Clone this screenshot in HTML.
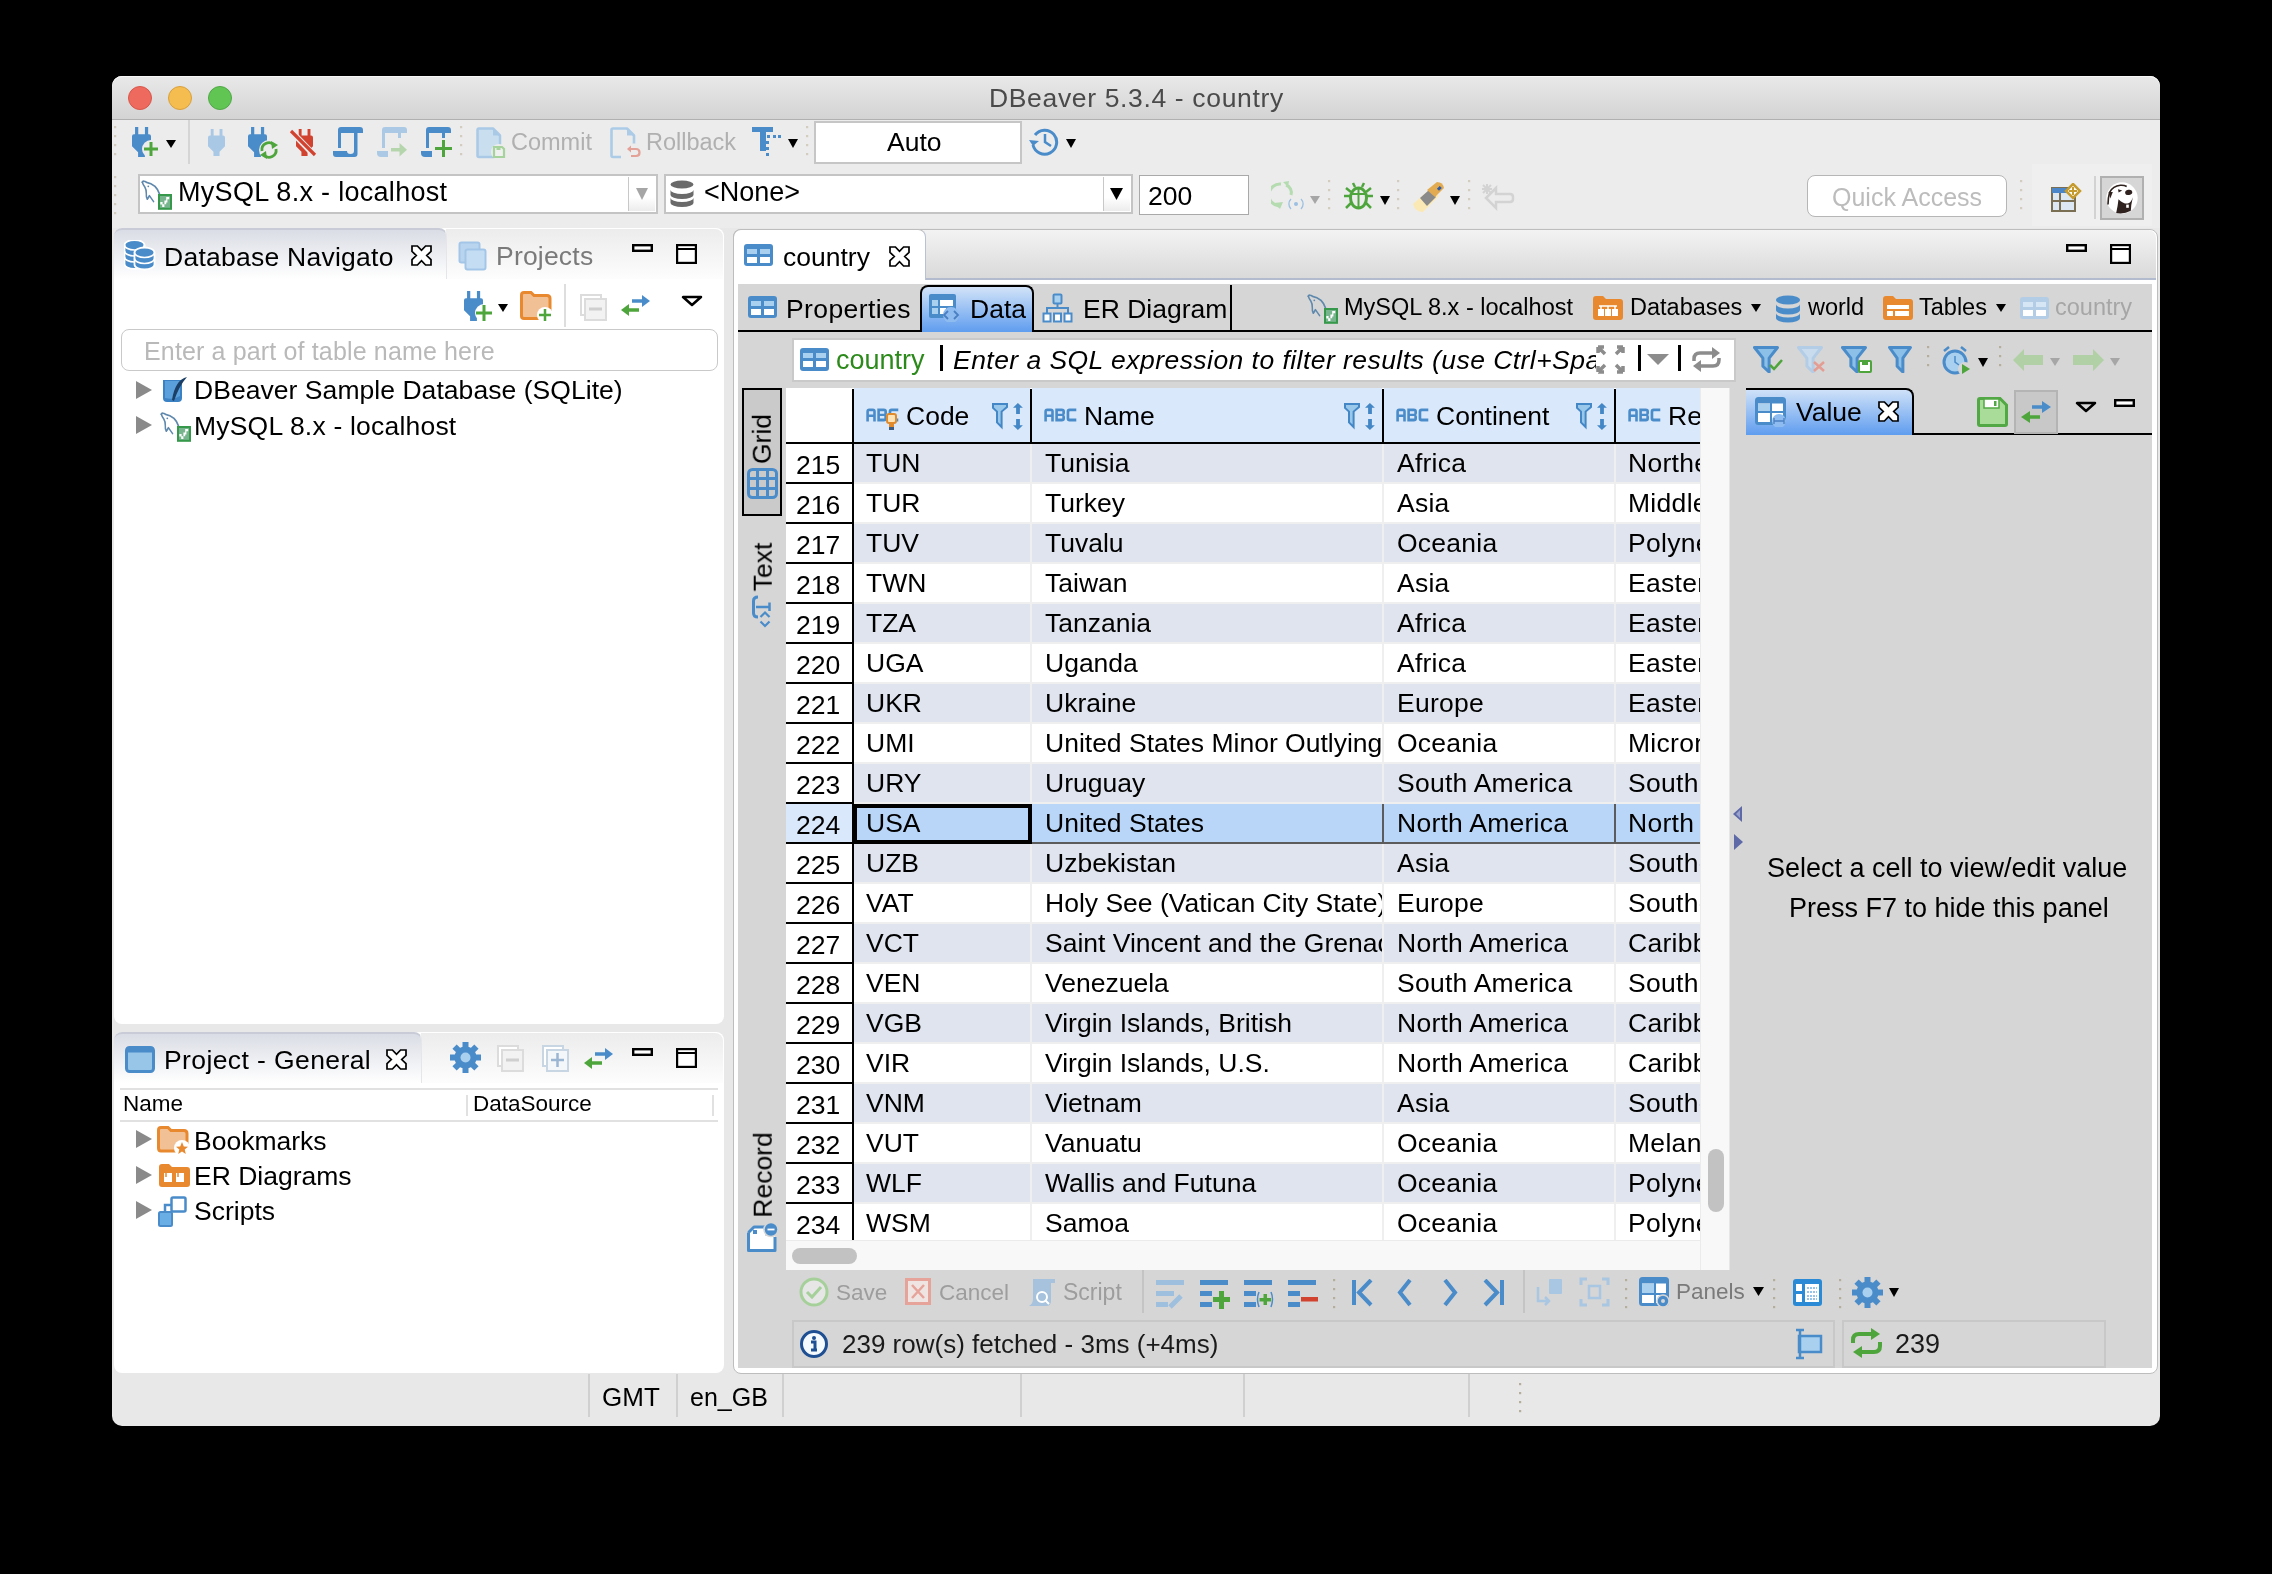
<!DOCTYPE html><html><head><meta charset="utf-8"><style>
*{box-sizing:border-box}
html,body{margin:0;padding:0}
body{width:2272px;height:1574px;background:#000;position:relative;overflow:hidden;font-family:"Liberation Sans",sans-serif}
.a{position:absolute;display:block}
.t{position:absolute;white-space:nowrap;line-height:1;font-family:"Liberation Sans",sans-serif;will-change:transform}
.i{font-style:italic}
</style></head><body>
<div class="a" style="left:112px;top:76px;width:2048px;height:1350px;background:#e8e8e8;border-radius:10px;overflow:hidden"></div>
<div class="a" style="left:112px;top:76px;width:2048px;height:44px;background:linear-gradient(#e9e9e9,#d3d3d3);border-radius:10px 10px 0 0;border-bottom:1px solid #b0b0b0;box-shadow:inset 0 1px 0 #f7f7f7"></div>
<div class="t " style="left:988.5px;top:85.18px;font-size:26.5px;color:#4a4a4a;letter-spacing:0.65px">DBeaver 5.3.4 - country</div>
<div class="a" style="left:128px;top:86px;width:24px;height:24px;background:#ee6a5e;border-radius:50%;border:1px solid #d8564a"></div>
<div class="a" style="left:168px;top:86px;width:24px;height:24px;background:#f5bd4f;border-radius:50%;border:1px solid #d9a03d"></div>
<div class="a" style="left:208px;top:86px;width:24px;height:24px;background:#61c554;border-radius:50%;border:1px solid #50a847"></div>
<div class="a" style="left:112px;top:120px;width:2048px;height:108px;background:#ececec"></div>
<svg class="a" style="left:114px;top:126px" width="3" height="34" viewBox="0 0 3 34"><rect x="0" y="0" width="2.2" height="2.2" fill="#d3cdc0"/><rect x="0" y="9" width="2.2" height="2.2" fill="#d3cdc0"/><rect x="0" y="18" width="2.2" height="2.2" fill="#d3cdc0"/><rect x="0" y="27" width="2.2" height="2.2" fill="#d3cdc0"/></svg>
<svg class="a" style="left:132px;top:127px" width="19" height="30" viewBox="0 0 19 30"><rect x="3.04" y="0" width="3.23" height="8.20" fill="#4a8cca"/><rect x="12.92" y="0" width="3.23" height="8.20" fill="#4a8cca"/><path d="M0 9.20Q0 7.20 2 7.20H17Q19 7.20 19 9.20V19.20L12.92 25.20V30H6.08V25.20L0 19.20Z" fill="#4a8cca"/></svg>
<svg class="a" style="left:141px;top:139px" width="20" height="20" viewBox="0 0 20 20"><circle cx="10" cy="10" r="9" fill="#ececec"/><rect x="8.5" y="3" width="3" height="14" fill="#4ea53c"/><rect x="3" y="8.5" width="14" height="3" fill="#4ea53c"/></svg>
<svg class="a" style="left:166px;top:140px" width="10" height="8" viewBox="0 0 10 8"><path d="M0 0H10L5.0 8Z" fill="#000"/></svg>
<div class="a" style="left:188px;top:120px;width:2px;height:44px;background:#d5d5d5"></div>
<svg class="a" style="left:208px;top:129px" width="17" height="27" viewBox="0 0 17 27"><rect x="2.72" y="0" width="2.89" height="7.48" fill="#a9c8e6"/><rect x="11.56" y="0" width="2.89" height="7.48" fill="#a9c8e6"/><path d="M0 8.48Q0 6.48 2 6.48H15Q17 6.48 17 8.48V17.28L11.56 22.68V27H5.44V22.68L0 17.28Z" fill="#a9c8e6"/></svg>
<svg class="a" style="left:248px;top:127px" width="19" height="30" viewBox="0 0 19 30"><rect x="3.04" y="0" width="3.23" height="8.20" fill="#4a8cca"/><rect x="12.92" y="0" width="3.23" height="8.20" fill="#4a8cca"/><path d="M0 9.20Q0 7.20 2 7.20H17Q19 7.20 19 9.20V19.20L12.92 25.20V30H6.08V25.20L0 19.20Z" fill="#4a8cca"/></svg>
<svg class="a" style="left:258px;top:139px" width="22" height="22" viewBox="0 0 22 22"><circle cx="11" cy="11" r="10" fill="#ececec"/><path d="M4 12A7 7 0 0 1 16 6" stroke="#4ea53c" stroke-width="2.8" fill="none"/><path d="M18 10A7 7 0 0 1 6 16" stroke="#4ea53c" stroke-width="2.8" fill="none"/><path d="M13 2L20 6L14 10Z" fill="#4ea53c"/><path d="M9 20L2 16L8 12Z" fill="#4ea53c"/></svg>
<svg class="a" style="left:296px;top:129px" width="17" height="27" viewBox="0 0 17 27"><rect x="2.72" y="0" width="2.89" height="7.48" fill="#d2432f"/><rect x="11.56" y="0" width="2.89" height="7.48" fill="#d2432f"/><path d="M0 8.48Q0 6.48 2 6.48H15Q17 6.48 17 8.48V17.28L11.56 22.68V27H5.44V22.68L0 17.28Z" fill="#d2432f"/></svg>
<svg class="a" style="left:288px;top:128px" width="30" height="30" viewBox="0 0 30 30"><path d="M2 2L28 29" stroke="#ececec" stroke-width="6"/><path d="M3 3L27 27" stroke="#d2432f" stroke-width="3.2"/></svg>
<svg class="a" style="left:333px;top:127px" width="30" height="30" viewBox="0 0 30 30"><path d="M5 21V3Q5 0 8 0H27Q30 0 30 3V6H24.5V27Q24.5 30 21.5 30H3Q0 30 0 27V24H14Q14 27 17.5 27Q21 27 21 24V6H8V21Z" fill="#4a8cca"/></svg>
<svg class="a" style="left:377px;top:127px" width="30" height="30" viewBox="0 0 30 30"><path d="M5 21V3Q5 0 8 0H27Q30 0 30 3V6H24V11H21V6H8V21Z" fill="#abc9e4"/><path d="M0 24H11V30H4Q0 30 0 26Z" fill="#abc9e4"/></svg>
<svg class="a" style="left:391px;top:143px" width="17" height="14" viewBox="0 0 17 14"><rect x="0" y="5" width="9" height="3.5" fill="#b5d6ad"/><path d="M8.5 0L16 6.7L8.5 13.5Z" fill="#b5d6ad"/></svg>
<svg class="a" style="left:421px;top:127px" width="30" height="30" viewBox="0 0 30 30"><path d="M5 21V3Q5 0 8 0H27Q30 0 30 3V6H24V11H21V6H8V21Z" fill="#4a8cca"/><path d="M0 24H11V30H4Q0 30 0 26Z" fill="#4a8cca"/></svg>
<svg class="a" style="left:435px;top:140px" width="17" height="17" viewBox="0 0 17 17"><rect x="7" y="0" width="3" height="17" fill="#4ea53c"/><rect x="0" y="7" width="17" height="3" fill="#4ea53c"/></svg>
<svg class="a" style="left:460px;top:126px" width="3" height="34" viewBox="0 0 3 34"><rect x="0" y="0" width="2.2" height="2.2" fill="#d3cdc0"/><rect x="0" y="9" width="2.2" height="2.2" fill="#d3cdc0"/><rect x="0" y="18" width="2.2" height="2.2" fill="#d3cdc0"/><rect x="0" y="27" width="2.2" height="2.2" fill="#d3cdc0"/></svg>
<svg class="a" style="left:475px;top:126px" width="32" height="33" viewBox="0 0 32 33"><path d="M2.5 4Q2.5 2.5 4 2.5H18L25 9.5V29.5Q25 31 23.5 31H4Q2.5 31 2.5 29.5Z" fill="#c9dff0" stroke="#a9c9e6" stroke-width="2.5" stroke-linejoin="round"/><path d="M18 2.5V9.5H25Z" fill="#a9c9e6"/><circle cx="24" cy="26" r="8" fill="#ececec"/><path d="M19 21H27L29 23V31H19Z" fill="#f0f0f0" stroke="#a6d29b" stroke-width="2.2"/><rect x="21.5" y="21" width="4" height="3" fill="#a6d29b"/></svg>
<div class="t " style="left:511px;top:130.53px;font-size:23.5px;color:#b0b0b0;">Commit</div>
<svg class="a" style="left:609px;top:126px" width="32" height="33" viewBox="0 0 32 33"><path d="M12 31H4Q2.5 31 2.5 29.5V4Q2.5 2.5 4 2.5H18L25 9.5V17.5" fill="none" stroke="#abcbe7" stroke-width="2.6" stroke-linejoin="round"/><path d="M18 2.5V9.5H25Z" fill="#abcbe7"/><path d="M20 23H27Q30.5 23 30.5 26.5Q30.5 30 27 30H22" stroke="#e3a197" stroke-width="2.2" fill="none"/><path d="M18 23L22 19.5V26.5Z" fill="#e3a197"/></svg>
<div class="t " style="left:645.5px;top:130.53px;font-size:23.5px;color:#b0b0b0;">Rollback</div>
<svg class="a" style="left:752px;top:127px" width="29" height="30" viewBox="0 0 29 30"><rect x="0" y="0" width="21" height="5" fill="#4a8cca"/><rect x="8" y="0" width="6" height="24" fill="#4a8cca"/><rect x="15" y="8" width="3" height="3" fill="#4a8cca"/><rect x="21" y="8" width="3" height="3" fill="#4a8cca"/><rect x="26" y="8" width="3" height="3" fill="#4a8cca"/><rect x="14" y="14" width="3" height="3" fill="#4a8cca"/><rect x="14" y="20" width="3" height="3" fill="#4a8cca"/><rect x="14" y="26" width="3" height="3" fill="#4a8cca"/></svg>
<svg class="a" style="left:788px;top:139px" width="10" height="9" viewBox="0 0 10 9"><path d="M0 0H10L5.0 9Z" fill="#000"/></svg>
<svg class="a" style="left:806px;top:126px" width="3" height="34" viewBox="0 0 3 34"><rect x="0" y="0" width="2.2" height="2.2" fill="#d3cdc0"/><rect x="0" y="9" width="2.2" height="2.2" fill="#d3cdc0"/><rect x="0" y="18" width="2.2" height="2.2" fill="#d3cdc0"/><rect x="0" y="27" width="2.2" height="2.2" fill="#d3cdc0"/></svg>
<div class="a" style="left:814px;top:121px;width:208px;height:43px;background:#fff;border:2px solid #c6c6c6"></div>
<div class="t " style="left:887px;top:129.47px;font-size:26.5px;color:#000;">Auto</div>
<svg class="a" style="left:1028px;top:126px" width="32" height="31" viewBox="0 0 32 31"><path d="M7 9A12 12 0 1 1 5 19" stroke="#4a8cca" stroke-width="3" fill="none"/><path d="M1 14L5 20L11 15Z" fill="#4a8cca"/><path d="M17 8V16L23 20" stroke="#4a8cca" stroke-width="2.5" fill="none"/></svg>
<svg class="a" style="left:1066px;top:139px" width="10" height="9" viewBox="0 0 10 9"><path d="M0 0H10L5.0 9Z" fill="#000"/></svg>
<svg class="a" style="left:114px;top:176px" width="3" height="40" viewBox="0 0 3 40"><rect x="0" y="0" width="2.2" height="2.2" fill="#d3cdc0"/><rect x="0" y="9" width="2.2" height="2.2" fill="#d3cdc0"/><rect x="0" y="18" width="2.2" height="2.2" fill="#d3cdc0"/><rect x="0" y="27" width="2.2" height="2.2" fill="#d3cdc0"/><rect x="0" y="36" width="2.2" height="2.2" fill="#d3cdc0"/></svg>
<div class="a" style="left:138px;top:174px;width:520px;height:40px;background:#fff;border:2px solid #c4c4c4"></div>
<div class="a" style="left:628px;top:177px;width:27px;height:34px;background:linear-gradient(#fff 60%,#ececec);border-left:1px solid #c8c8c8"></div>
<svg class="a" style="left:636px;top:188px" width="12" height="12" viewBox="0 0 12 12"><path d="M0 0H12L6 12Z" fill="#a6a6a6"/></svg>
<svg class="a" style="left:138px;top:176px" width="36" height="36" viewBox="0 0 36 36"><path d="M4.3 6.2Q5.5 4.2 8.5 6.3Q13 7 17 10.3Q20.2 13.5 21.4 17.8" stroke="#5f88ad" stroke-width="1.7" fill="none" stroke-linecap="round"/><path d="M4.3 6.2Q5 8.5 6.8 11Q8.6 14 8.3 17.5Q8 21 9.3 23.3Q10.5 21.5 11.4 19.6L15.6 25.6" stroke="#5f88ad" stroke-width="1.5" fill="none" stroke-linecap="round" stroke-linejoin="round"/><circle cx="10.3" cy="10.3" r="0.9" fill="#5f88ad"/><rect x="20" y="18" width="14" height="15.8" fill="#35984a"/><rect x="22" y="20" width="10" height="11.8" fill="#78b58e"/><path d="M22.3 26H24.6V28.2H26.4V31H24.2V28.6H22.3Z" fill="#fff"/><path d="M26.4 28.2V24.5H28.2V21H31.2V23.2H29.4V26.6H28.2V28.2Z" fill="#fff"/></svg>
<div class="t " style="left:177.5px;top:179.05px;font-size:27px;color:#000;letter-spacing:0.3px">MySQL 8.x - localhost</div>
<div class="a" style="left:664px;top:174px;width:469px;height:40px;background:#fff;border:2px solid #c4c4c4"></div>
<div class="a" style="left:1103px;top:177px;width:27px;height:34px;background:linear-gradient(#fff 60%,#ececec);border-left:1px solid #c8c8c8"></div>
<svg class="a" style="left:1110px;top:188px" width="13" height="12" viewBox="0 0 13 12"><path d="M0 0H13L6.5 12Z" fill="#000"/></svg>
<svg class="a" style="left:670px;top:180px" width="24" height="27" viewBox="0 0 24 27"><ellipse cx="12.0" cy="4.5" rx="11.5" ry="4" fill="#6a6a6a"/><path d="M0.5 10A11.5 4 0 0 0 23.5 10V15A11.5 4 0 0 1 0.5 15Z" fill="#6a6a6a"/><path d="M0.5 18A11.5 4 0 0 0 23.5 18V23A11.5 4 0 0 1 0.5 23Z" fill="#6a6a6a"/></svg>
<div class="t " style="left:704px;top:179.05px;font-size:27px;color:#000;">&lt;None&gt;</div>
<div class="a" style="left:1139px;top:175px;width:110px;height:40px;background:#fff;border:1px solid #a9a9a9"></div>
<div class="t " style="left:1147.5px;top:183.47px;font-size:26.5px;color:#000;">200</div>
<svg class="a" style="left:1271px;top:181px" width="34" height="30" viewBox="0 0 34 30"><path d="M10 3A11 11 0 0 0 8 25" stroke="#b5dbb0" stroke-width="3" fill="none"/><path d="M3 22L9 28L12 21Z" fill="#b5dbb0"/><path d="M18 26V4" stroke="none"/><path d="M20 14A8 8 0 0 0 15 4" stroke="#b5dbb0" stroke-width="3" fill="none"/><path d="M12 1L18 0L17 6Z" fill="#b5dbb0"/><circle cx="25" cy="23" r="2" fill="#9cc0e2"/><path d="M20 18A7 7 0 0 0 20 28M30 18A7 7 0 0 1 30 28" stroke="#9cc0e2" stroke-width="1.3" fill="none"/></svg>
<svg class="a" style="left:1310px;top:196px" width="10" height="8" viewBox="0 0 10 8"><path d="M0 0H10L5 8Z" fill="#a6a6a6"/></svg>
<svg class="a" style="left:1328px;top:180px" width="3" height="34" viewBox="0 0 3 34"><rect x="0" y="0" width="2.2" height="2.2" fill="#d3cdc0"/><rect x="0" y="9" width="2.2" height="2.2" fill="#d3cdc0"/><rect x="0" y="18" width="2.2" height="2.2" fill="#d3cdc0"/><rect x="0" y="27" width="2.2" height="2.2" fill="#d3cdc0"/></svg>
<svg class="a" style="left:1343px;top:182px" width="31" height="29" viewBox="0 0 31 29"><ellipse cx="15.5" cy="16" rx="8" ry="10" fill="none" stroke="#4ea53c" stroke-width="3"/><path d="M15.5 7V26M9 12H22" stroke="#4ea53c" stroke-width="2"/><path d="M1 14H7M24 14H30M3 6L8 10M28 6L23 10M3 26L8 21M28 26L23 21M10 1L12 5M21 1L19 5" stroke="#4ea53c" stroke-width="2.5"/></svg>
<svg class="a" style="left:1380px;top:196px" width="10" height="9" viewBox="0 0 10 9"><path d="M0 0H10L5.0 9Z" fill="#000"/></svg>
<svg class="a" style="left:1397px;top:180px" width="3" height="34" viewBox="0 0 3 34"><rect x="0" y="0" width="2.2" height="2.2" fill="#d3cdc0"/><rect x="0" y="9" width="2.2" height="2.2" fill="#d3cdc0"/><rect x="0" y="18" width="2.2" height="2.2" fill="#d3cdc0"/><rect x="0" y="27" width="2.2" height="2.2" fill="#d3cdc0"/></svg>
<svg class="a" style="left:1411px;top:182px" width="34" height="30" viewBox="0 0 34 30"><path d="M2 22L20 6L28 14L12 30Q4 30 2 22Z" fill="#fbe9b5"/><path d="M9 16L18 8L25 15L16 24Z" fill="#8a8a8a"/><path d="M16 8L26 0Q32 0 33 6L24 15Z" fill="#e2ab52"/><rect x="27" y="4" width="3" height="4" fill="#2d5aa6" transform="rotate(45 28 6)"/></svg>
<svg class="a" style="left:1450px;top:196px" width="10" height="9" viewBox="0 0 10 9"><path d="M0 0H10L5.0 9Z" fill="#000"/></svg>
<svg class="a" style="left:1468px;top:180px" width="3" height="34" viewBox="0 0 3 34"><rect x="0" y="0" width="2.2" height="2.2" fill="#d3cdc0"/><rect x="0" y="9" width="2.2" height="2.2" fill="#d3cdc0"/><rect x="0" y="18" width="2.2" height="2.2" fill="#d3cdc0"/><rect x="0" y="27" width="2.2" height="2.2" fill="#d3cdc0"/></svg>
<svg class="a" style="left:1482px;top:182px" width="33" height="30" viewBox="0 0 33 30"><path d="M5 2V12M0 7H10M1 3L9 11M9 3L1 11" stroke="#d3d3d3" stroke-width="2"/><path d="M14 6L4 16L14 26V20H28Q31 20 31 17V15Q31 12 28 12H14Z" fill="none" stroke="#d3d3d3" stroke-width="2.5"/></svg>
<div class="a" style="left:1807px;top:175px;width:200px;height:42px;background:#fff;border:1px solid #b6b6b6;border-radius:8px"></div>
<div class="t " style="left:1831.5px;top:184.75px;font-size:25px;color:#bcbcbc;">Quick Access</div>
<svg class="a" style="left:2020px;top:180px" width="3" height="36" viewBox="0 0 3 36"><rect x="0" y="0" width="2.2" height="2.2" fill="#d3cdc0"/><rect x="0" y="9" width="2.2" height="2.2" fill="#d3cdc0"/><rect x="0" y="18" width="2.2" height="2.2" fill="#d3cdc0"/><rect x="0" y="27" width="2.2" height="2.2" fill="#d3cdc0"/></svg>
<div class="a" style="left:2032px;top:164px;width:120px;height:62px;background:#efefef"></div>
<svg class="a" style="left:2051px;top:183px" width="31" height="30" viewBox="0 0 31 30"><rect x="1" y="5" width="23" height="23" fill="#dce9f5" stroke="#7a6f53" stroke-width="2"/><rect x="1" y="5" width="23" height="5" fill="#4a86c8"/><path d="M9 10V28M1 18H24" stroke="#7a6f53" stroke-width="2"/><path d="M22 1L29 8L22 15L15 8Z" fill="#fff" stroke="#c59b2d" stroke-width="2.5"/><path d="M22 4V12M18 8H26" stroke="#c59b2d" stroke-width="2"/></svg>
<div class="a" style="left:2094px;top:176px;width:2px;height:43px;background:#d2d2d2"></div>
<svg class="a" style="left:2098px;top:174px" width="48" height="48" viewBox="0 0 48 48"><rect x="3" y="3" width="42" height="42" fill="#d6d6d6" stroke="#b0b0b0" stroke-width="2"/><circle cx="24" cy="24" r="15.7" fill="#fff"/><g fill="#2e211e"><path d="M10 30.5Q10 24 11.6 18.3Q15 12 22.3 11.3Q26 11 28.7 12.5" stroke="#2e211e" stroke-width="1.6" fill="none"/><path d="M10.7 18L14.8 18L12.3 24.5Z"/><path d="M20 15.2L24.2 16.6L20.6 18.6Z"/><ellipse cx="30.7" cy="18.4" rx="3.6" ry="2.6" transform="rotate(-12 30.7 18.4)"/><path d="M20.5 25.2Q25 29.8 29.5 29.6Q33 29 34.8 23.2L33.3 31L32.8 36.8Q26 40.5 18.2 39Q19.8 32 20.5 25.2Z"/><rect x="28.2" y="30.6" width="2.6" height="3.2" fill="#fff"/></g></svg>
<div class="a" style="left:114px;top:228px;width:610px;height:796px;background:#fff;border-radius:8px"></div>
<div class="a" style="left:446px;top:229px;width:277px;height:50px;background:linear-gradient(#ececec,#fdfdfd);border-radius:0 8px 0 0"></div>
<div class="a" style="left:114px;top:228px;width:333px;height:51px;background:linear-gradient(#dadde5,#ffffff);border-radius:8px 8px 0 0;border-top:2px solid #c9ccd6;border-right:1px solid #e4e6ea"></div>
<svg class="a" style="left:124px;top:240px" width="32" height="31" viewBox="0 0 32 31"><path d="M0.5 5V24A10 5 0 0 0 20.5 24V5A10 5 0 0 0 0.5 5Z" fill="#4a8cca" stroke="#fff" stroke-width="1.8"/><path d="M0.5 5A10 5 0 0 0 20.5 5" fill="none" stroke="#fff" stroke-width="1.6"/><path d="M0.5 11A10 5 0 0 0 20.5 11" fill="none" stroke="#fff" stroke-width="1.6"/><path d="M0.5 17A10 5 0 0 0 20.5 17" fill="none" stroke="#fff" stroke-width="1.6"/><path d="M10.5 12.5V24.5A10 5 0 0 0 30.5 24.5V12.5A10 5 0 0 0 10.5 12.5Z" fill="#4a8cca" stroke="#fff" stroke-width="1.8"/><path d="M10.5 12.5A10 5 0 0 0 30.5 12.5" fill="none" stroke="#fff" stroke-width="1.6"/><path d="M10.5 18.5A10 5 0 0 0 30.5 18.5" fill="none" stroke="#fff" stroke-width="1.6"/></svg>
<div class="t " style="left:163.5px;top:243.58px;font-size:26.5px;color:#000;letter-spacing:0.25px">Database Navigato</div>
<svg class="a" style="left:411px;top:245px" width="22" height="22" viewBox="0 0 22 22"><path d="M1.00 1.00 L6.42 1.00 L10.50 5.28 L14.58 1.00 L20.00 1.00 L20.00 6.42 L15.72 10.50 L20.00 14.58 L20.00 20.00 L14.58 20.00 L10.50 15.72 L6.42 20.00 L1.00 20.00 L1.00 14.58 L5.28 10.50 L1.00 6.42Z" fill="#fff" stroke="#000" stroke-width="1.7" stroke-linejoin="miter"/></svg>
<svg class="a" style="left:458px;top:241px" width="29" height="30" viewBox="0 0 29 30"><rect x="1.5" y="1.5" width="20" height="20" rx="2" fill="#b8d4ee" stroke="#a3c6e8" stroke-width="2"/><rect x="7.5" y="8.5" width="20" height="20" rx="2" fill="#c4ddf2" stroke="#a3c6e8" stroke-width="2"/></svg>
<div class="t " style="left:495.5px;top:243.08px;font-size:26.5px;color:#7a7a7a;letter-spacing:0.2px">Projects</div>
<svg class="a" style="left:632px;top:244px" width="21" height="8" viewBox="0 0 21 8"><rect x="1.2" y="1.2" width="18.6" height="5.6" fill="#fff" stroke="#000" stroke-width="2.4"/></svg>
<svg class="a" style="left:676px;top:244px" width="21" height="20" viewBox="0 0 21 20"><rect x="1.1" y="1.1" width="18.8" height="17.8" fill="#fff" stroke="#000" stroke-width="2.2"/><rect x="1" y="4" width="19" height="2" fill="#000"/></svg>
<svg class="a" style="left:464px;top:291px" width="19" height="30" viewBox="0 0 19 30"><rect x="3.04" y="0" width="3.23" height="8.20" fill="#4a8cca"/><rect x="12.92" y="0" width="3.23" height="8.20" fill="#4a8cca"/><path d="M0 9.20Q0 7.20 2 7.20H17Q19 7.20 19 9.20V19.20L12.92 25.20V30H6.08V25.20L0 19.20Z" fill="#4a8cca"/></svg>
<svg class="a" style="left:474px;top:303px" width="20" height="20" viewBox="0 0 20 20"><circle cx="10" cy="10" r="9" fill="#fff"/><rect x="8.5" y="2" width="3" height="16" fill="#4ea53c"/><rect x="2" y="8.5" width="16" height="3" fill="#4ea53c"/></svg>
<svg class="a" style="left:498px;top:304px" width="10" height="8" viewBox="0 0 10 8"><path d="M0 0H10L5.0 8Z" fill="#000"/></svg>
<svg class="a" style="left:520px;top:291px" width="33" height="30" viewBox="0 0 33 30"><path d="M1.5 4Q1.5 1.5 4 1.5H11L14 4.5H27Q30 4.5 30 7.5V25Q30 27.5 27 27.5H4Q1.5 27.5 1.5 25Z" fill="#f2c095" stroke="#e8892f" stroke-width="3"/><circle cx="25" cy="24" r="8" fill="#fff"/><path d="M25 18V30M19 24H31" stroke="#4ea53c" stroke-width="2.5"/></svg>
<div class="a" style="left:564px;top:284px;width:2px;height:43px;background:#dedede"></div>
<svg class="a" style="left:580px;top:294px" width="27" height="27" viewBox="0 0 27 27"><rect x="1" y="1" width="20" height="20" fill="#fff" stroke="#dcdcdc" stroke-width="2"/><rect x="5" y="5" width="21" height="21" fill="#f2f2f2" stroke="#dcdcdc" stroke-width="2"/><path d="M9 15H22" stroke="#cfcfcf" stroke-width="3"/></svg>
<svg class="a" style="left:620px;top:295px" width="31" height="22" viewBox="0 0 31 22"><path d="M12 6H26" stroke="#4a8cca" stroke-width="3.5"/><path d="M22 0L30 6L22 12Z" fill="#4a8cca"/><path d="M6 15H19" stroke="#4ea53c" stroke-width="3.5"/><path d="M9 9L1 15L9 21Z" fill="#4ea53c"/></svg>
<svg class="a" style="left:681px;top:295px" width="22" height="12" viewBox="0 0 22 12"><path d="M2 2H20L11 10Z" fill="none" stroke="#000" stroke-width="2.5" stroke-linejoin="round"/></svg>
<div class="a" style="left:121px;top:329px;width:597px;height:42px;background:#fff;border:1.5px solid #c9c9c9;border-radius:8px"></div>
<div class="t " style="left:143.5px;top:338.75px;font-size:25px;color:#b9b9b9;letter-spacing:0.15px">Enter a part of table name here</div>
<svg class="a" style="left:136px;top:381px" width="16" height="18" viewBox="0 0 16 18"><path d="M0 0L16 9L0 18Z" fill="#8a8a8a"/></svg>
<svg class="a" style="left:160px;top:376px" width="28" height="28" viewBox="0 0 28 28"><path d="M3 4H22V22Q22 26 18 26H7Q3 26 3 22Z" fill="#3b82c4"/><path d="M5 5H20V20Q14 24 5 22Z" fill="#5aa0dc"/><path d="M27 1Q15 4 12 24L14 25Q19 10 27 1Z" fill="#1c3f66"/></svg>
<div class="t " style="left:193.5px;top:377.18px;font-size:26.5px;color:#000;letter-spacing:0.05px">DBeaver Sample Database (SQLite)</div>
<svg class="a" style="left:136px;top:416px" width="16" height="18" viewBox="0 0 16 18"><path d="M0 0L16 9L0 18Z" fill="#8a8a8a"/></svg>
<svg class="a" style="left:157px;top:408px" width="36" height="36" viewBox="0 0 36 36"><path d="M4.3 6.2Q5.5 4.2 8.5 6.3Q13 7 17 10.3Q20.2 13.5 21.4 17.8" stroke="#5f88ad" stroke-width="1.7" fill="none" stroke-linecap="round"/><path d="M4.3 6.2Q5 8.5 6.8 11Q8.6 14 8.3 17.5Q8 21 9.3 23.3Q10.5 21.5 11.4 19.6L15.6 25.6" stroke="#5f88ad" stroke-width="1.5" fill="none" stroke-linecap="round" stroke-linejoin="round"/><circle cx="10.3" cy="10.3" r="0.9" fill="#5f88ad"/><rect x="20" y="18" width="14" height="15.8" fill="#35984a"/><rect x="22" y="20" width="10" height="11.8" fill="#78b58e"/><path d="M22.3 26H24.6V28.2H26.4V31H24.2V28.6H22.3Z" fill="#fff"/><path d="M26.4 28.2V24.5H28.2V21H31.2V23.2H29.4V26.6H28.2V28.2Z" fill="#fff"/></svg>
<div class="t " style="left:193.5px;top:412.98px;font-size:26.5px;color:#000;letter-spacing:0.2px">MySQL 8.x - localhost</div>
<div class="a" style="left:114px;top:1032px;width:610px;height:341px;background:#fff;border-radius:8px"></div>
<div class="a" style="left:421px;top:1033px;width:302px;height:50px;background:linear-gradient(#ececec,#fdfdfd);border-radius:0 8px 0 0"></div>
<div class="a" style="left:114px;top:1032px;width:308px;height:51px;background:linear-gradient(#dadde5,#ffffff);border-radius:8px 8px 0 0;border-top:2px solid #c9ccd6;border-right:1px solid #e4e6ea"></div>
<svg class="a" style="left:125px;top:1046px" width="31" height="28" viewBox="0 0 31 28"><rect x="1.5" y="1.5" width="27" height="24" rx="3" fill="#97c6e8" stroke="#4a8cca" stroke-width="3"/><rect x="1.5" y="1.5" width="27" height="5" fill="#4a8cca"/></svg>
<div class="t " style="left:163.5px;top:1047.38px;font-size:26.5px;color:#000;letter-spacing:0.4px">Project - General</div>
<svg class="a" style="left:386px;top:1049px" width="22" height="22" viewBox="0 0 22 22"><path d="M1.00 1.00 L6.42 1.00 L10.50 5.28 L14.58 1.00 L20.00 1.00 L20.00 6.42 L15.72 10.50 L20.00 14.58 L20.00 20.00 L14.58 20.00 L10.50 15.72 L6.42 20.00 L1.00 20.00 L1.00 14.58 L5.28 10.50 L1.00 6.42Z" fill="#fff" stroke="#000" stroke-width="1.7" stroke-linejoin="miter"/></svg>
<svg class="a" style="left:450px;top:1042px" width="31" height="31" viewBox="0 0 31 31"><circle cx="15.5" cy="15.5" r="11" fill="#4a8cca"/><circle cx="15.5" cy="15.5" r="5" fill="#a9d0ee"/><rect x="12.5" y="0" width="6" height="7" fill="#4a8cca" transform="rotate(0 15.5 15.5)"/><rect x="12.5" y="0" width="6" height="7" fill="#4a8cca" transform="rotate(45 15.5 15.5)"/><rect x="12.5" y="0" width="6" height="7" fill="#4a8cca" transform="rotate(90 15.5 15.5)"/><rect x="12.5" y="0" width="6" height="7" fill="#4a8cca" transform="rotate(135 15.5 15.5)"/><rect x="12.5" y="0" width="6" height="7" fill="#4a8cca" transform="rotate(180 15.5 15.5)"/><rect x="12.5" y="0" width="6" height="7" fill="#4a8cca" transform="rotate(225 15.5 15.5)"/><rect x="12.5" y="0" width="6" height="7" fill="#4a8cca" transform="rotate(270 15.5 15.5)"/><rect x="12.5" y="0" width="6" height="7" fill="#4a8cca" transform="rotate(315 15.5 15.5)"/></svg>
<svg class="a" style="left:497px;top:1045px" width="28" height="28" viewBox="0 0 28 28"><rect x="1" y="1" width="20" height="20" fill="#fff" stroke="#dcdcdc" stroke-width="2"/><rect x="5" y="5" width="21" height="21" fill="#f2f2f2" stroke="#dcdcdc" stroke-width="2"/><path d="M9 15H22" stroke="#cfcfcf" stroke-width="3"/></svg>
<svg class="a" style="left:542px;top:1045px" width="27" height="28" viewBox="0 0 27 28"><rect x="1" y="1" width="20" height="20" fill="#fff" stroke="#c8d6e4" stroke-width="2"/><rect x="5" y="5" width="21" height="21" fill="#f4f7fa" stroke="#c8d6e4" stroke-width="2"/><path d="M9 15H22M15.5 8V22" stroke="#9ab6d2" stroke-width="2.5"/></svg>
<svg class="a" style="left:583px;top:1048px" width="31" height="22" viewBox="0 0 31 22"><path d="M12 6H26" stroke="#4a8cca" stroke-width="3.5"/><path d="M22 0L30 6L22 12Z" fill="#4a8cca"/><path d="M6 15H19" stroke="#4ea53c" stroke-width="3.5"/><path d="M9 9L1 15L9 21Z" fill="#4ea53c"/></svg>
<svg class="a" style="left:632px;top:1048px" width="21" height="8" viewBox="0 0 21 8"><rect x="1.2" y="1.2" width="18.6" height="5.6" fill="#fff" stroke="#000" stroke-width="2.4"/></svg>
<svg class="a" style="left:676px;top:1048px" width="21" height="20" viewBox="0 0 21 20"><rect x="1.1" y="1.1" width="18.8" height="17.8" fill="#fff" stroke="#000" stroke-width="2.2"/><rect x="1" y="4" width="19" height="2" fill="#000"/></svg>
<div class="a" style="left:120px;top:1088px;width:598px;height:2px;background:#e1e1e1"></div>
<div class="a" style="left:120px;top:1120px;width:598px;height:2px;background:#e1e1e1"></div>
<div class="t " style="left:123px;top:1092.88px;font-size:22.5px;color:#000;">Name</div>
<div class="a" style="left:466px;top:1095px;width:2px;height:21px;background:#e1e1e1"></div>
<div class="t " style="left:472.5px;top:1092.88px;font-size:22.5px;color:#000;">DataSource</div>
<div class="a" style="left:712px;top:1095px;width:2px;height:21px;background:#e1e1e1"></div>
<svg class="a" style="left:136px;top:1130px" width="16" height="18" viewBox="0 0 16 18"><path d="M0 0L16 9L0 18Z" fill="#8a8a8a"/></svg>
<svg class="a" style="left:157px;top:1126px" width="34" height="30" viewBox="0 0 34 30"><path d="M1.5 4Q1.5 1.5 4 1.5H11L14 4.5H27Q30 4.5 30 7.5V22Q30 25 27 25H4Q1.5 25 1.5 22Z" fill="#f2c095" stroke="#e8892f" stroke-width="3"/><circle cx="25" cy="22" r="8" fill="#fff"/><path d="M25 16L26.8 20.5L31 20.7L27.7 23.5L28.8 28L25 25.4L21.2 28L22.3 23.5L19 20.7L23.2 20.5Z" fill="#e8892f"/></svg>
<div class="t " style="left:193.5px;top:1128.17px;font-size:26.5px;color:#000;">Bookmarks</div>
<svg class="a" style="left:136px;top:1166px" width="16" height="18" viewBox="0 0 16 18"><path d="M0 0L16 9L0 18Z" fill="#8a8a8a"/></svg>
<svg class="a" style="left:159px;top:1163px" width="31" height="24" viewBox="0 0 31 24"><path d="M0 4Q0 1 3 1H10L13 4H28Q31 4 31 7V21Q31 24 28 24H3Q0 24 0 21Z" fill="#e8892f"/><rect x="5" y="10" width="8" height="9" fill="#fff"/><rect x="17" y="10" width="8" height="9" fill="#fff"/><path d="M7 10V14M19 10V14" stroke="#e8892f" stroke-width="1.5"/></svg>
<div class="t " style="left:193.5px;top:1163.47px;font-size:26.5px;color:#000;">ER Diagrams</div>
<svg class="a" style="left:136px;top:1201px" width="16" height="18" viewBox="0 0 16 18"><path d="M0 0L16 9L0 18Z" fill="#8a8a8a"/></svg>
<svg class="a" style="left:157px;top:1196px" width="32" height="32" viewBox="0 0 32 32"><rect x="14.5" y="1.5" width="14" height="14" rx="1.5" fill="#fff" stroke="#4a8cca" stroke-width="2.5"/><path d="M8 16V9H14" stroke="#4a8cca" stroke-width="2.5" fill="none"/><rect x="2" y="16" width="13" height="14" rx="1.5" fill="#6aaee6" stroke="#4a8cca" stroke-width="2"/></svg>
<div class="t " style="left:193.5px;top:1198.47px;font-size:26.5px;color:#000;">Scripts</div>
<div class="a" style="left:588px;top:1374px;width:2px;height:43px;background:#d0d0d0"></div>
<div class="a" style="left:676px;top:1374px;width:2px;height:43px;background:#d0d0d0"></div>
<div class="a" style="left:782px;top:1374px;width:2px;height:43px;background:#d0d0d0"></div>
<div class="a" style="left:1020px;top:1374px;width:2px;height:43px;background:#d0d0d0"></div>
<div class="a" style="left:1243px;top:1374px;width:2px;height:43px;background:#d0d0d0"></div>
<div class="t " style="left:602px;top:1383.90px;font-size:26px;color:#000;">GMT</div>
<div class="t " style="left:690px;top:1384.75px;font-size:25px;color:#000;">en_GB</div>
<div class="a" style="left:1468px;top:1374px;width:2px;height:43px;background:#d0d0d0"></div>
<svg class="a" style="left:1519px;top:1383px" width="3" height="34" viewBox="0 0 3 34"><rect x="0" y="0" width="2.2" height="2.2" fill="#b5ae9c"/><rect x="0" y="9" width="2.2" height="2.2" fill="#b5ae9c"/><rect x="0" y="18" width="2.2" height="2.2" fill="#b5ae9c"/><rect x="0" y="27" width="2.2" height="2.2" fill="#b5ae9c"/></svg>
<div class="a" style="left:732.5px;top:228.5px;width:1425px;height:1145px;background:#fff;border:1.5px solid #bdbdbd;border-radius:8px"></div>
<div class="a" style="left:734px;top:230px;width:1422px;height:49px;background:linear-gradient(#f3f3f3,#d9d9d9);border-radius:8px 8px 0 0"></div>
<div class="a" style="left:734px;top:278px;width:1422px;height:2px;background:#b3bbce"></div>
<div class="a" style="left:732.5px;top:228.5px;width:193px;height:51.5px;background:#fff;border:1.5px solid #bdbdbd;border-right-color:#b9c1d3;border-bottom:none;border-radius:8px 8px 0 0"></div>
<svg class="a" style="left:744px;top:244px" width="29" height="22" viewBox="0 0 29 22"><rect x="0" y="0" width="29" height="22" rx="3" fill="#4a8cca"/><rect x="3" y="5" width="10.0" height="5" fill="#a9d0ee"/><rect x="16.0" y="5" width="10.0" height="5" fill="#a9d0ee"/><rect x="3" y="13" width="10.0" height="6" fill="#fff"/><rect x="16.0" y="13" width="10.0" height="6" fill="#fff"/></svg>
<div class="t " style="left:782.5px;top:243.97px;font-size:26.5px;color:#000;">country</div>
<svg class="a" style="left:889px;top:246px" width="22" height="22" viewBox="0 0 22 22"><path d="M1.00 1.00 L6.42 1.00 L10.50 5.28 L14.58 1.00 L20.00 1.00 L20.00 6.42 L15.72 10.50 L20.00 14.58 L20.00 20.00 L14.58 20.00 L10.50 15.72 L6.42 20.00 L1.00 20.00 L1.00 14.58 L5.28 10.50 L1.00 6.42Z" fill="#fff" stroke="#000" stroke-width="1.7" stroke-linejoin="miter"/></svg>
<svg class="a" style="left:2066px;top:244px" width="21" height="8" viewBox="0 0 21 8"><rect x="1.2" y="1.2" width="18.6" height="5.6" fill="#fff" stroke="#000" stroke-width="2.4"/></svg>
<svg class="a" style="left:2110px;top:244px" width="21" height="20" viewBox="0 0 21 20"><rect x="1.1" y="1.1" width="18.8" height="17.8" fill="#fff" stroke="#000" stroke-width="2.2"/><rect x="1" y="4" width="19" height="2" fill="#000"/></svg>
<div class="a" style="left:738px;top:284px;width:1414px;height:1084px;background:#d6d6d6"></div>
<div class="a" style="left:738px;top:330px;width:182px;height:2px;background:#000"></div>
<div class="a" style="left:1034px;top:330px;width:1118px;height:2px;background:#000"></div>
<svg class="a" style="left:748px;top:296px" width="29" height="22" viewBox="0 0 29 22"><rect x="0" y="0" width="29" height="22" rx="3" fill="#4a8cca"/><rect x="3" y="5" width="10.0" height="5" fill="#a9d0ee"/><rect x="16.0" y="5" width="10.0" height="5" fill="#a9d0ee"/><rect x="3" y="13" width="10.0" height="6" fill="#fff"/><rect x="16.0" y="13" width="10.0" height="6" fill="#fff"/></svg>
<div class="t " style="left:785.5px;top:295.98px;font-size:26.5px;color:#000;letter-spacing:0.4px">Properties</div>
<div class="a" style="left:920px;top:285px;width:114px;height:47px;background:linear-gradient(#d2e3f8,#5f9def);border:2px solid #000;border-bottom:none;border-radius:8px 8px 0 0"></div>
<svg class="a" style="left:929px;top:294px" width="31" height="28" viewBox="0 0 31 28"><rect x="0" y="0" width="27" height="24" rx="2" fill="#4a8cca"/><rect x="3" y="6" width="6" height="6" fill="#a9d0ee"/><rect x="3" y="14" width="6" height="6" fill="#a9d0ee"/><rect x="11" y="6" width="13" height="6" fill="#fff"/><rect x="11" y="14" width="6" height="6" fill="#fff"/><circle cx="22" cy="21" r="8" fill="#8fbcf0"/><path d="M19 17L15 21L19 25M25 17L29 21L25 25" stroke="#4a7fc1" stroke-width="1.8" fill="none"/></svg>
<div class="t " style="left:970px;top:295.98px;font-size:26.5px;color:#000;">Data</div>
<svg class="a" style="left:1042px;top:293px" width="31" height="30" viewBox="0 0 31 30"><rect x="11.5" y="1.5" width="8" height="9" rx="1" fill="#a9d0ee" stroke="#4a8cca" stroke-width="2"/><path d="M15.5 11V15M5 20V15H26V20" stroke="#4a8cca" stroke-width="2" fill="none"/><rect x="1.5" y="20.5" width="7" height="8" fill="#fff" stroke="#4a8cca" stroke-width="2"/><rect x="12" y="20.5" width="7" height="8" fill="#fff" stroke="#4a8cca" stroke-width="2"/><rect x="22.5" y="20.5" width="7" height="8" fill="#fff" stroke="#4a8cca" stroke-width="2"/></svg>
<div class="t " style="left:1083px;top:295.98px;font-size:26.5px;color:#000;">ER Diagram</div>
<div class="a" style="left:1230px;top:285px;width:2px;height:45px;background:#000"></div>
<svg class="a" style="left:1304px;top:289.5px" width="36" height="36" viewBox="0 0 36 36"><path d="M4.3 6.2Q5.5 4.2 8.5 6.3Q13 7 17 10.3Q20.2 13.5 21.4 17.8" stroke="#5f88ad" stroke-width="1.7" fill="none" stroke-linecap="round"/><path d="M4.3 6.2Q5 8.5 6.8 11Q8.6 14 8.3 17.5Q8 21 9.3 23.3Q10.5 21.5 11.4 19.6L15.6 25.6" stroke="#5f88ad" stroke-width="1.5" fill="none" stroke-linecap="round" stroke-linejoin="round"/><circle cx="10.3" cy="10.3" r="0.9" fill="#5f88ad"/><rect x="20" y="18" width="14" height="15.8" fill="#35984a"/><rect x="22" y="20" width="10" height="11.8" fill="#78b58e"/><path d="M22.3 26H24.6V28.2H26.4V31H24.2V28.6H22.3Z" fill="#fff"/><path d="M26.4 28.2V24.5H28.2V21H31.2V23.2H29.4V26.6H28.2V28.2Z" fill="#fff"/></svg>
<div class="t " style="left:1343.5px;top:296.02px;font-size:23.5px;color:#000;">MySQL 8.x - localhost</div>
<svg class="a" style="left:1593px;top:296px" width="30" height="24" viewBox="0 0 30 24"><path d="M0 3Q0 0 3 0H10L13 3H27Q30 3 30 6V21Q30 24 27 24H3Q0 24 0 21Z" fill="#e8892f"/><path d="M6 10H24M8 10V13M15 10V13M22 10V13" stroke="#fff" stroke-width="1.5"/><rect x="5" y="13" width="6" height="7" fill="#fff"/><rect x="12" y="13" width="6" height="7" fill="#fff"/><rect x="19" y="13" width="6" height="7" fill="#fff"/></svg>
<div class="t " style="left:1630px;top:296.02px;font-size:23.5px;color:#000;">Databases</div>
<svg class="a" style="left:1751px;top:304px" width="10" height="8" viewBox="0 0 10 8"><path d="M0 0H10L5.0 8Z" fill="#000"/></svg>
<svg class="a" style="left:1775px;top:295px" width="26" height="28" viewBox="0 0 26 28"><ellipse cx="13" cy="5" rx="12" ry="4.5" fill="#4a8cca"/><path d="M1 9A12 4.5 0 0 0 25 9V15A12 4.5 0 0 1 1 15Z" fill="#4a8cca"/><path d="M1 18A12 4.5 0 0 0 25 18V23A12 4.5 0 0 1 1 23Z" fill="#4a8cca"/></svg>
<div class="t " style="left:1808px;top:296.02px;font-size:23.5px;color:#000;">world</div>
<svg class="a" style="left:1883px;top:296px" width="30" height="24" viewBox="0 0 30 24"><path d="M0 3Q0 0 3 0H10L13 3H27Q30 3 30 6V21Q30 24 27 24H3Q0 24 0 21Z" fill="#e8892f"/><rect x="4" y="9" width="22" height="4" fill="#fff"/><rect x="4" y="15" width="6" height="5" fill="#fff"/><rect x="12" y="15" width="14" height="5" fill="#fff"/></svg>
<div class="t " style="left:1919px;top:296.02px;font-size:23.5px;color:#000;">Tables</div>
<svg class="a" style="left:1996px;top:304px" width="10" height="8" viewBox="0 0 10 8"><path d="M0 0H10L5.0 8Z" fill="#000"/></svg>
<svg class="a" style="left:2020px;top:297px" width="29" height="22" viewBox="0 0 29 22"><rect x="0" y="0" width="29" height="22" rx="3" fill="#b3cde6"/><rect x="3" y="5" width="10.0" height="5" fill="#d6e6f4"/><rect x="16.0" y="5" width="10.0" height="5" fill="#d6e6f4"/><rect x="3" y="13" width="10.0" height="6" fill="#fff"/><rect x="16.0" y="13" width="10.0" height="6" fill="#fff"/></svg>
<div class="t " style="left:2055px;top:296.02px;font-size:23.5px;color:#a6a6a6;">country</div>
<div class="a" style="left:792px;top:338px;width:944px;height:44px;background:#fff;border:2px solid #c9c9c9"></div>
<svg class="a" style="left:800px;top:348px" width="29" height="23" viewBox="0 0 29 23"><rect x="0" y="0" width="29" height="23" rx="3" fill="#4a8cca"/><rect x="3" y="5" width="10.0" height="5" fill="#a9d0ee"/><rect x="16.0" y="5" width="10.0" height="5" fill="#a9d0ee"/><rect x="3" y="13" width="10.0" height="6" fill="#fff"/><rect x="16.0" y="13" width="10.0" height="6" fill="#fff"/></svg>
<div class="t " style="left:835.5px;top:347.05px;font-size:27px;color:#2c8a1b;">country</div>
<div class="a" style="left:940px;top:345px;width:2.5px;height:26px;background:#000"></div>
<div class="a" style="left:950px;top:340px;width:646px;height:40px;overflow:hidden">
<div class="t i" style="left:3px;top:7px;font-size:26.5px;color:#000;letter-spacing:0.45px">Enter a SQL expression to filter results (use Ctrl+Space)</div></div>
<svg class="a" style="left:1596px;top:345px" width="29" height="29" viewBox="0 0 29 29"><path d="M2 2L9 9M2 2V8M2 2H8M27 2L20 9M27 2V8M27 2H21M2 27L9 20M2 27V21M2 27H8M27 27L20 20M27 27V21M27 27H21" stroke="#8c8c8c" stroke-width="3.5" fill="none"/></svg>
<div class="a" style="left:1638px;top:345px;width:2.5px;height:26px;background:#000"></div>
<svg class="a" style="left:1647px;top:354px" width="22" height="11" viewBox="0 0 22 11"><path d="M0 0H22L11 11Z" fill="#8c8c8c"/></svg>
<div class="a" style="left:1678px;top:345px;width:2.5px;height:26px;background:#000"></div>
<svg class="a" style="left:1691px;top:346px" width="31" height="27" viewBox="0 0 31 27"><path d="M3 15V13Q3 7 9 7H24" stroke="#8c8c8c" stroke-width="3.5" fill="none"/><path d="M21 1L29 7L21 13Z" fill="#8c8c8c"/><path d="M28 12V14Q28 20 22 20H7" stroke="#8c8c8c" stroke-width="3.5" fill="none"/><path d="M10 14L2 20L10 26Z" fill="#8c8c8c"/></svg>
<svg class="a" style="left:1753px;top:346px" width="26" height="27" viewBox="0 0 26 27"><path d="M1.5 1.5H24.5L16.12 12.15V26L9.88 20.25V12.15Z" fill="#8cc0e8" stroke="#4a8cca" stroke-width="3" stroke-linejoin="round"/></svg>
<svg class="a" style="left:1768px;top:358px" width="16" height="14" viewBox="0 0 16 14"><path d="M2 7L6 11L14 2" stroke="#4ea53c" stroke-width="2.5" fill="none"/></svg>
<svg class="a" style="left:1797px;top:346px" width="26" height="27" viewBox="0 0 26 27"><path d="M1.5 1.5H24.5L16.12 12.15V26L9.88 20.25V12.15Z" fill="#c8dcee" stroke="#b3cde6" stroke-width="3" stroke-linejoin="round"/></svg>
<svg class="a" style="left:1812px;top:360px" width="14" height="13" viewBox="0 0 14 13"><path d="M2 2L12 11M12 2L2 11" stroke="#e39d93" stroke-width="2.5"/></svg>
<svg class="a" style="left:1841px;top:346px" width="26" height="27" viewBox="0 0 26 27"><path d="M1.5 1.5H24.5L16.12 12.15V26L9.88 20.25V12.15Z" fill="#8cc0e8" stroke="#4a8cca" stroke-width="3" stroke-linejoin="round"/></svg>
<svg class="a" style="left:1858px;top:360px" width="14" height="13" viewBox="0 0 14 13"><rect x="1" y="1" width="12" height="11" rx="1" fill="#fff" stroke="#4ea53c" stroke-width="2"/><rect x="4" y="1" width="6" height="4" fill="#4ea53c"/></svg>
<svg class="a" style="left:1888px;top:346px" width="24" height="27" viewBox="0 0 24 27"><path d="M1.5 1.5H22.5L14.879999999999999 12.15V26L9.120000000000001 20.25V12.15Z" fill="#8cc0e8" stroke="#4a8cca" stroke-width="3" stroke-linejoin="round"/></svg>
<svg class="a" style="left:1927px;top:346px" width="3" height="28" viewBox="0 0 3 28"><rect x="0" y="0" width="2.2" height="2.2" fill="#b5ae9c"/><rect x="0" y="9" width="2.2" height="2.2" fill="#b5ae9c"/><rect x="0" y="18" width="2.2" height="2.2" fill="#b5ae9c"/></svg>
<svg class="a" style="left:1941px;top:345px" width="32" height="30" viewBox="0 0 32 30"><circle cx="14" cy="17" r="11" fill="#a9d0ee" stroke="#4a8cca" stroke-width="3"/><path d="M14 11V17L18 20" stroke="#4a8cca" stroke-width="1.5" fill="none"/><path d="M3 6L8 2M25 6L20 2" stroke="#4a8cca" stroke-width="2.5"/><circle cx="24" cy="24" r="7" fill="#d6d6d6"/><path d="M21 19L29 24L21 29Z" fill="#4ea53c"/></svg>
<svg class="a" style="left:1978px;top:358px" width="10" height="9" viewBox="0 0 10 9"><path d="M0 0H10L5.0 9Z" fill="#000"/></svg>
<svg class="a" style="left:1999px;top:346px" width="3" height="28" viewBox="0 0 3 28"><rect x="0" y="0" width="2.2" height="2.2" fill="#b5ae9c"/><rect x="0" y="9" width="2.2" height="2.2" fill="#b5ae9c"/><rect x="0" y="18" width="2.2" height="2.2" fill="#b5ae9c"/></svg>
<svg class="a" style="left:2013px;top:349px" width="31" height="22" viewBox="0 0 31 22"><path d="M0 11L11 0V6H30V16H11V22Z" fill="#b1d0a6"/></svg>
<svg class="a" style="left:2050px;top:358px" width="10" height="8" viewBox="0 0 10 8"><path d="M0 0H10L5 8Z" fill="#a6a6a6"/></svg>
<svg class="a" style="left:2073px;top:349px" width="31" height="22" viewBox="0 0 31 22"><path d="M31 11L20 0V6H0V16H20V22Z" fill="#b1d0a6"/></svg>
<svg class="a" style="left:2110px;top:358px" width="10" height="8" viewBox="0 0 10 8"><path d="M0 0H10L5 8Z" fill="#a6a6a6"/></svg>
<div class="a" style="left:742px;top:388px;width:40px;height:128px;background:#cacaca;border:2px solid #000"></div>
<div class="t" style="left:762px;top:438.5px;font-size:26.5px;transform:translate(-50%,-50%) rotate(-90deg)">Grid</div>
<svg class="a" style="left:747px;top:468px" width="31" height="31" viewBox="0 0 31 31"><rect x="1.5" y="1.5" width="28" height="28" rx="4" fill="#cacaca" stroke="#4a8cca" stroke-width="3"/><path d="M10.5 2V29M20.5 2V29M2 10.5H29M2 20.5H29" stroke="#4a8cca" stroke-width="3"/></svg>
<div class="t" style="left:762.5px;top:566.5px;font-size:26.5px;transform:translate(-50%,-50%) rotate(-90deg)">Text</div>
<svg class="a" style="left:748px;top:595px" width="26" height="34" viewBox="0 0 26 34"><path d="M10 2Q5.5 2 5.5 6V18Q5.5 22 10 22" stroke="#4a8cca" stroke-width="3" fill="none"/><path d="M8 12H21.5M21.5 7.5V16" stroke="#4a8cca" stroke-width="2.5" fill="none"/><path d="M12.5 22L17 17.5L21.5 22M12.5 26.5L17 31L21.5 26.5" stroke="#4a8cca" stroke-width="2.2" fill="none"/></svg>
<div class="t" style="left:762.5px;top:1175px;font-size:26.5px;transform:translate(-50%,-50%) rotate(-90deg)">Record</div>
<svg class="a" style="left:746px;top:1222px" width="33" height="31" viewBox="0 0 33 31"><path d="M2.5 10.5L8 5H19V14H29V28.5H2.5Z" fill="#fff"/><path d="M2.5 10.5L8 5H19M29 15V28.5H2.5V10.5" stroke="#4a8cca" stroke-width="3" fill="none" stroke-linejoin="round"/><rect x="7" y="8" width="4" height="4" fill="#4a8cca"/><circle cx="25" cy="7.5" r="7.8" fill="#d6d6d6"/><circle cx="25" cy="7.5" r="6.2" fill="#4a8cca"/><path d="M21.5 7.5H28.5" stroke="#fff" stroke-width="1.8"/></svg>
<div class="a" style="left:786px;top:388px;width:944px;height:882px;background:#f8f8f8"></div>
<div class="a" style="left:786px;top:388px;width:914px;height:852px;overflow:hidden;background:#fff">
<div class="a" style="left:0px;top:0px;width:66px;height:54px;background:#fff"></div>
<div class="a" style="left:68px;top:0px;width:176px;height:54px;background:#dae8fb"></div>
<div class="a" style="left:246px;top:0px;width:350px;height:54px;background:#dae8fb"></div>
<div class="a" style="left:598px;top:0px;width:230px;height:54px;background:#dae8fb"></div>
<div class="a" style="left:830px;top:0px;width:284px;height:54px;background:#dae8fb"></div>
<div class="a" style="left:0px;top:54px;width:1000px;height:2px;background:#000"></div>
<div class="a" style="left:66px;top:1px;width:2px;height:55px;background:#000"></div>
<div class="a" style="left:244px;top:1px;width:2px;height:55px;background:#000"></div>
<div class="a" style="left:596px;top:1px;width:2px;height:55px;background:#000"></div>
<div class="a" style="left:828px;top:1px;width:2px;height:55px;background:#000"></div>
<svg class="a" style="left:80px;top:20px" width="33" height="14"><g fill="#4a8cca" fill-rule="evenodd" transform="translate(0.3 0.4)"><path d="M0 13V3Q0 0 3 0H6.5Q9.5 0 9.5 3V13H6.9V8.6H2.6V13ZM2.6 2.8V6.2H6.9V2.8Z"/><path d="M11 0H17.5Q20.7 0 20.7 3V4.5Q20.7 6.5 19.5 6.5Q20.7 6.5 20.7 8.5V10Q20.7 13 17.5 13H11ZM13.6 2.8V5.3H18V2.8ZM13.6 7.7V10.2H18V7.7Z"/><path d="M25.3 0H32V2.8H25.6Q25 2.8 25 3.4V9.6Q25 10.2 25.6 10.2H32V13H25.3Q22.3 13 22.3 10V3Q22.3 0 25.3 0Z"/></g></svg>
<div class="t" style="left:119.5px;top:15.48px;font-size:26.5px;color:#000;">Code</div>
<svg class="a" style="left:198px;top:10px" width="46" height="38"><path d="M9 6H23V9L17.6 13.6V29L13 24.4V13.6L9 9.9Z" fill="#99c8ea" stroke="#4487c6" stroke-width="2" stroke-linejoin="miter"/><path d="M33.9 5L38.9 9.8H35.9V15.9H32.1V9.8H29Z" fill="#4487c6"/><path d="M33.9 32L38.9 27.2H35.9V21H32.1V27.2H29Z" fill="#4487c6"/></svg>
<svg class="a" style="left:257.5px;top:20px" width="33" height="14"><g fill="#4a8cca" fill-rule="evenodd" transform="translate(0.3 0.4)"><path d="M0 13V3Q0 0 3 0H6.5Q9.5 0 9.5 3V13H6.9V8.6H2.6V13ZM2.6 2.8V6.2H6.9V2.8Z"/><path d="M11 0H17.5Q20.7 0 20.7 3V4.5Q20.7 6.5 19.5 6.5Q20.7 6.5 20.7 8.5V10Q20.7 13 17.5 13H11ZM13.6 2.8V5.3H18V2.8ZM13.6 7.7V10.2H18V7.7Z"/><path d="M25.3 0H32V2.8H25.6Q25 2.8 25 3.4V9.6Q25 10.2 25.6 10.2H32V13H25.3Q22.3 13 22.3 10V3Q22.3 0 25.3 0Z"/></g></svg>
<div class="t" style="left:297.5px;top:15.48px;font-size:26.5px;color:#000;">Name</div>
<svg class="a" style="left:550px;top:10px" width="46" height="38"><path d="M9 6H23V9L17.6 13.6V29L13 24.4V13.6L9 9.9Z" fill="#99c8ea" stroke="#4487c6" stroke-width="2" stroke-linejoin="miter"/><path d="M33.9 5L38.9 9.8H35.9V15.9H32.1V9.8H29Z" fill="#4487c6"/><path d="M33.9 32L38.9 27.2H35.9V21H32.1V27.2H29Z" fill="#4487c6"/></svg>
<svg class="a" style="left:610px;top:20px" width="33" height="14"><g fill="#4a8cca" fill-rule="evenodd" transform="translate(0.3 0.4)"><path d="M0 13V3Q0 0 3 0H6.5Q9.5 0 9.5 3V13H6.9V8.6H2.6V13ZM2.6 2.8V6.2H6.9V2.8Z"/><path d="M11 0H17.5Q20.7 0 20.7 3V4.5Q20.7 6.5 19.5 6.5Q20.7 6.5 20.7 8.5V10Q20.7 13 17.5 13H11ZM13.6 2.8V5.3H18V2.8ZM13.6 7.7V10.2H18V7.7Z"/><path d="M25.3 0H32V2.8H25.6Q25 2.8 25 3.4V9.6Q25 10.2 25.6 10.2H32V13H25.3Q22.3 13 22.3 10V3Q22.3 0 25.3 0Z"/></g></svg>
<div class="t" style="left:649.5px;top:15.48px;font-size:26.5px;color:#000;">Continent</div>
<svg class="a" style="left:782px;top:10px" width="46" height="38"><path d="M9 6H23V9L17.6 13.6V29L13 24.4V13.6L9 9.9Z" fill="#99c8ea" stroke="#4487c6" stroke-width="2" stroke-linejoin="miter"/><path d="M33.9 5L38.9 9.8H35.9V15.9H32.1V9.8H29Z" fill="#4487c6"/><path d="M33.9 32L38.9 27.2H35.9V21H32.1V27.2H29Z" fill="#4487c6"/></svg>
<svg class="a" style="left:842px;top:20px" width="33" height="14"><g fill="#4a8cca" fill-rule="evenodd" transform="translate(0.3 0.4)"><path d="M0 13V3Q0 0 3 0H6.5Q9.5 0 9.5 3V13H6.9V8.6H2.6V13ZM2.6 2.8V6.2H6.9V2.8Z"/><path d="M11 0H17.5Q20.7 0 20.7 3V4.5Q20.7 6.5 19.5 6.5Q20.7 6.5 20.7 8.5V10Q20.7 13 17.5 13H11ZM13.6 2.8V5.3H18V2.8ZM13.6 7.7V10.2H18V7.7Z"/><path d="M25.3 0H32V2.8H25.6Q25 2.8 25 3.4V9.6Q25 10.2 25.6 10.2H32V13H25.3Q22.3 13 22.3 10V3Q22.3 0 25.3 0Z"/></g></svg>
<div class="t" style="left:882px;top:15.48px;font-size:26.5px;color:#000;">Region</div>
<svg class="a" style="left:100px;top:25px" width="12" height="17"><rect x="1" y="1" width="9" height="9" rx="2" fill="#fde3b7" stroke="#e08a2c" stroke-width="2"/><rect x="3" y="10" width="5" height="5" fill="#e08a2c"/><rect x="3" y="14" width="5" height="3" fill="#3d5a80"/></svg>
<div class="a" style="left:0px;top:56px;width:66px;height:38px;background:#fff"></div>
<div class="a" style="left:66px;top:56px;width:2px;height:40px;background:#000"></div>
<div class="a" style="left:0px;top:94px;width:66px;height:2px;background:#000"></div>
<div class="a" style="left:68px;top:56px;width:176px;height:38px;background:#dfe4ee"></div>
<div class="a" style="left:246px;top:56px;width:350px;height:38px;background:#dfe4ee"></div>
<div class="a" style="left:598px;top:56px;width:230px;height:38px;background:#dfe4ee"></div>
<div class="a" style="left:830px;top:56px;width:284px;height:38px;background:#dfe4ee"></div>
<div class="a" style="left:68px;top:94px;width:1000px;height:2px;background:#efefef"></div>
<div class="a" style="left:244px;top:56px;width:2px;height:38px;background:#efefef"></div>
<div class="a" style="left:596px;top:56px;width:2px;height:38px;background:#efefef"></div>
<div class="a" style="left:828px;top:56px;width:2px;height:38px;background:#efefef"></div>
<div class="t" style="left:9.5px;top:64.47px;font-size:26.5px;color:#000;">215</div>
<div class="a" style="left:80px;top:56px;width:164px;height:38px;overflow:hidden">
<div class="t" style="left:0;top:6.48px;font-size:26.5px">TUN</div></div>
<div class="a" style="left:259px;top:56px;width:337px;height:38px;overflow:hidden">
<div class="t" style="left:0;top:6.48px;font-size:26.5px">Tunisia</div></div>
<div class="a" style="left:611px;top:56px;width:217px;height:38px;overflow:hidden">
<div class="t" style="left:0;top:6.48px;font-size:26.5px;letter-spacing:0.25px">Africa</div></div>
<div class="t" style="left:842px;top:62.48px;font-size:26.5px;color:#000;letter-spacing:0.3px">Northern Africa</div>
<div class="a" style="left:0px;top:96px;width:66px;height:38px;background:#fff"></div>
<div class="a" style="left:66px;top:96px;width:2px;height:40px;background:#000"></div>
<div class="a" style="left:0px;top:134px;width:66px;height:2px;background:#000"></div>
<div class="a" style="left:68px;top:96px;width:176px;height:38px;background:#ffffff"></div>
<div class="a" style="left:246px;top:96px;width:350px;height:38px;background:#ffffff"></div>
<div class="a" style="left:598px;top:96px;width:230px;height:38px;background:#ffffff"></div>
<div class="a" style="left:830px;top:96px;width:284px;height:38px;background:#ffffff"></div>
<div class="a" style="left:68px;top:134px;width:1000px;height:2px;background:#efefef"></div>
<div class="a" style="left:244px;top:96px;width:2px;height:38px;background:#efefef"></div>
<div class="a" style="left:596px;top:96px;width:2px;height:38px;background:#efefef"></div>
<div class="a" style="left:828px;top:96px;width:2px;height:38px;background:#efefef"></div>
<div class="t" style="left:9.5px;top:104.47px;font-size:26.5px;color:#000;">216</div>
<div class="a" style="left:80px;top:96px;width:164px;height:38px;overflow:hidden">
<div class="t" style="left:0;top:6.48px;font-size:26.5px">TUR</div></div>
<div class="a" style="left:259px;top:96px;width:337px;height:38px;overflow:hidden">
<div class="t" style="left:0;top:6.48px;font-size:26.5px">Turkey</div></div>
<div class="a" style="left:611px;top:96px;width:217px;height:38px;overflow:hidden">
<div class="t" style="left:0;top:6.48px;font-size:26.5px;letter-spacing:0.25px">Asia</div></div>
<div class="t" style="left:842px;top:102.47px;font-size:26.5px;color:#000;letter-spacing:0.3px">Middle East</div>
<div class="a" style="left:0px;top:136px;width:66px;height:38px;background:#fff"></div>
<div class="a" style="left:66px;top:136px;width:2px;height:40px;background:#000"></div>
<div class="a" style="left:0px;top:174px;width:66px;height:2px;background:#000"></div>
<div class="a" style="left:68px;top:136px;width:176px;height:38px;background:#dfe4ee"></div>
<div class="a" style="left:246px;top:136px;width:350px;height:38px;background:#dfe4ee"></div>
<div class="a" style="left:598px;top:136px;width:230px;height:38px;background:#dfe4ee"></div>
<div class="a" style="left:830px;top:136px;width:284px;height:38px;background:#dfe4ee"></div>
<div class="a" style="left:68px;top:174px;width:1000px;height:2px;background:#efefef"></div>
<div class="a" style="left:244px;top:136px;width:2px;height:38px;background:#efefef"></div>
<div class="a" style="left:596px;top:136px;width:2px;height:38px;background:#efefef"></div>
<div class="a" style="left:828px;top:136px;width:2px;height:38px;background:#efefef"></div>
<div class="t" style="left:9.5px;top:144.47px;font-size:26.5px;color:#000;">217</div>
<div class="a" style="left:80px;top:136px;width:164px;height:38px;overflow:hidden">
<div class="t" style="left:0;top:6.48px;font-size:26.5px">TUV</div></div>
<div class="a" style="left:259px;top:136px;width:337px;height:38px;overflow:hidden">
<div class="t" style="left:0;top:6.48px;font-size:26.5px">Tuvalu</div></div>
<div class="a" style="left:611px;top:136px;width:217px;height:38px;overflow:hidden">
<div class="t" style="left:0;top:6.48px;font-size:26.5px;letter-spacing:0.25px">Oceania</div></div>
<div class="t" style="left:842px;top:142.47px;font-size:26.5px;color:#000;letter-spacing:0.3px">Polynesia</div>
<div class="a" style="left:0px;top:176px;width:66px;height:38px;background:#fff"></div>
<div class="a" style="left:66px;top:176px;width:2px;height:40px;background:#000"></div>
<div class="a" style="left:0px;top:214px;width:66px;height:2px;background:#000"></div>
<div class="a" style="left:68px;top:176px;width:176px;height:38px;background:#ffffff"></div>
<div class="a" style="left:246px;top:176px;width:350px;height:38px;background:#ffffff"></div>
<div class="a" style="left:598px;top:176px;width:230px;height:38px;background:#ffffff"></div>
<div class="a" style="left:830px;top:176px;width:284px;height:38px;background:#ffffff"></div>
<div class="a" style="left:68px;top:214px;width:1000px;height:2px;background:#efefef"></div>
<div class="a" style="left:244px;top:176px;width:2px;height:38px;background:#efefef"></div>
<div class="a" style="left:596px;top:176px;width:2px;height:38px;background:#efefef"></div>
<div class="a" style="left:828px;top:176px;width:2px;height:38px;background:#efefef"></div>
<div class="t" style="left:9.5px;top:184.47px;font-size:26.5px;color:#000;">218</div>
<div class="a" style="left:80px;top:176px;width:164px;height:38px;overflow:hidden">
<div class="t" style="left:0;top:6.48px;font-size:26.5px">TWN</div></div>
<div class="a" style="left:259px;top:176px;width:337px;height:38px;overflow:hidden">
<div class="t" style="left:0;top:6.48px;font-size:26.5px">Taiwan</div></div>
<div class="a" style="left:611px;top:176px;width:217px;height:38px;overflow:hidden">
<div class="t" style="left:0;top:6.48px;font-size:26.5px;letter-spacing:0.25px">Asia</div></div>
<div class="t" style="left:842px;top:182.47px;font-size:26.5px;color:#000;letter-spacing:0.3px">Eastern Asia</div>
<div class="a" style="left:0px;top:216px;width:66px;height:38px;background:#fff"></div>
<div class="a" style="left:66px;top:216px;width:2px;height:40px;background:#000"></div>
<div class="a" style="left:0px;top:254px;width:66px;height:2px;background:#000"></div>
<div class="a" style="left:68px;top:216px;width:176px;height:38px;background:#dfe4ee"></div>
<div class="a" style="left:246px;top:216px;width:350px;height:38px;background:#dfe4ee"></div>
<div class="a" style="left:598px;top:216px;width:230px;height:38px;background:#dfe4ee"></div>
<div class="a" style="left:830px;top:216px;width:284px;height:38px;background:#dfe4ee"></div>
<div class="a" style="left:68px;top:254px;width:1000px;height:2px;background:#efefef"></div>
<div class="a" style="left:244px;top:216px;width:2px;height:38px;background:#efefef"></div>
<div class="a" style="left:596px;top:216px;width:2px;height:38px;background:#efefef"></div>
<div class="a" style="left:828px;top:216px;width:2px;height:38px;background:#efefef"></div>
<div class="t" style="left:9.5px;top:224.47px;font-size:26.5px;color:#000;">219</div>
<div class="a" style="left:80px;top:216px;width:164px;height:38px;overflow:hidden">
<div class="t" style="left:0;top:6.48px;font-size:26.5px">TZA</div></div>
<div class="a" style="left:259px;top:216px;width:337px;height:38px;overflow:hidden">
<div class="t" style="left:0;top:6.48px;font-size:26.5px">Tanzania</div></div>
<div class="a" style="left:611px;top:216px;width:217px;height:38px;overflow:hidden">
<div class="t" style="left:0;top:6.48px;font-size:26.5px;letter-spacing:0.25px">Africa</div></div>
<div class="t" style="left:842px;top:222.47px;font-size:26.5px;color:#000;letter-spacing:0.3px">Eastern Africa</div>
<div class="a" style="left:0px;top:256px;width:66px;height:38px;background:#fff"></div>
<div class="a" style="left:66px;top:256px;width:2px;height:40px;background:#000"></div>
<div class="a" style="left:0px;top:294px;width:66px;height:2px;background:#000"></div>
<div class="a" style="left:68px;top:256px;width:176px;height:38px;background:#ffffff"></div>
<div class="a" style="left:246px;top:256px;width:350px;height:38px;background:#ffffff"></div>
<div class="a" style="left:598px;top:256px;width:230px;height:38px;background:#ffffff"></div>
<div class="a" style="left:830px;top:256px;width:284px;height:38px;background:#ffffff"></div>
<div class="a" style="left:68px;top:294px;width:1000px;height:2px;background:#efefef"></div>
<div class="a" style="left:244px;top:256px;width:2px;height:38px;background:#efefef"></div>
<div class="a" style="left:596px;top:256px;width:2px;height:38px;background:#efefef"></div>
<div class="a" style="left:828px;top:256px;width:2px;height:38px;background:#efefef"></div>
<div class="t" style="left:9.5px;top:264.48px;font-size:26.5px;color:#000;">220</div>
<div class="a" style="left:80px;top:256px;width:164px;height:38px;overflow:hidden">
<div class="t" style="left:0;top:6.48px;font-size:26.5px">UGA</div></div>
<div class="a" style="left:259px;top:256px;width:337px;height:38px;overflow:hidden">
<div class="t" style="left:0;top:6.48px;font-size:26.5px">Uganda</div></div>
<div class="a" style="left:611px;top:256px;width:217px;height:38px;overflow:hidden">
<div class="t" style="left:0;top:6.48px;font-size:26.5px;letter-spacing:0.25px">Africa</div></div>
<div class="t" style="left:842px;top:262.48px;font-size:26.5px;color:#000;letter-spacing:0.3px">Eastern Africa</div>
<div class="a" style="left:0px;top:296px;width:66px;height:38px;background:#fff"></div>
<div class="a" style="left:66px;top:296px;width:2px;height:40px;background:#000"></div>
<div class="a" style="left:0px;top:334px;width:66px;height:2px;background:#000"></div>
<div class="a" style="left:68px;top:296px;width:176px;height:38px;background:#dfe4ee"></div>
<div class="a" style="left:246px;top:296px;width:350px;height:38px;background:#dfe4ee"></div>
<div class="a" style="left:598px;top:296px;width:230px;height:38px;background:#dfe4ee"></div>
<div class="a" style="left:830px;top:296px;width:284px;height:38px;background:#dfe4ee"></div>
<div class="a" style="left:68px;top:334px;width:1000px;height:2px;background:#efefef"></div>
<div class="a" style="left:244px;top:296px;width:2px;height:38px;background:#efefef"></div>
<div class="a" style="left:596px;top:296px;width:2px;height:38px;background:#efefef"></div>
<div class="a" style="left:828px;top:296px;width:2px;height:38px;background:#efefef"></div>
<div class="t" style="left:9.5px;top:304.48px;font-size:26.5px;color:#000;">221</div>
<div class="a" style="left:80px;top:296px;width:164px;height:38px;overflow:hidden">
<div class="t" style="left:0;top:6.48px;font-size:26.5px">UKR</div></div>
<div class="a" style="left:259px;top:296px;width:337px;height:38px;overflow:hidden">
<div class="t" style="left:0;top:6.48px;font-size:26.5px">Ukraine</div></div>
<div class="a" style="left:611px;top:296px;width:217px;height:38px;overflow:hidden">
<div class="t" style="left:0;top:6.48px;font-size:26.5px;letter-spacing:0.25px">Europe</div></div>
<div class="t" style="left:842px;top:302.48px;font-size:26.5px;color:#000;letter-spacing:0.3px">Eastern Europe</div>
<div class="a" style="left:0px;top:336px;width:66px;height:38px;background:#fff"></div>
<div class="a" style="left:66px;top:336px;width:2px;height:40px;background:#000"></div>
<div class="a" style="left:0px;top:374px;width:66px;height:2px;background:#000"></div>
<div class="a" style="left:68px;top:336px;width:176px;height:38px;background:#ffffff"></div>
<div class="a" style="left:246px;top:336px;width:350px;height:38px;background:#ffffff"></div>
<div class="a" style="left:598px;top:336px;width:230px;height:38px;background:#ffffff"></div>
<div class="a" style="left:830px;top:336px;width:284px;height:38px;background:#ffffff"></div>
<div class="a" style="left:68px;top:374px;width:1000px;height:2px;background:#efefef"></div>
<div class="a" style="left:244px;top:336px;width:2px;height:38px;background:#efefef"></div>
<div class="a" style="left:596px;top:336px;width:2px;height:38px;background:#efefef"></div>
<div class="a" style="left:828px;top:336px;width:2px;height:38px;background:#efefef"></div>
<div class="t" style="left:9.5px;top:344.48px;font-size:26.5px;color:#000;">222</div>
<div class="a" style="left:80px;top:336px;width:164px;height:38px;overflow:hidden">
<div class="t" style="left:0;top:6.48px;font-size:26.5px">UMI</div></div>
<div class="a" style="left:259px;top:336px;width:337px;height:38px;overflow:hidden">
<div class="t" style="left:0;top:6.48px;font-size:26.5px">United States Minor Outlying Islands</div></div>
<div class="a" style="left:611px;top:336px;width:217px;height:38px;overflow:hidden">
<div class="t" style="left:0;top:6.48px;font-size:26.5px;letter-spacing:0.25px">Oceania</div></div>
<div class="t" style="left:842px;top:342.48px;font-size:26.5px;color:#000;letter-spacing:0.3px">Micronesia/Caribbean</div>
<div class="a" style="left:0px;top:376px;width:66px;height:38px;background:#fff"></div>
<div class="a" style="left:66px;top:376px;width:2px;height:40px;background:#000"></div>
<div class="a" style="left:0px;top:414px;width:66px;height:2px;background:#000"></div>
<div class="a" style="left:68px;top:376px;width:176px;height:38px;background:#dfe4ee"></div>
<div class="a" style="left:246px;top:376px;width:350px;height:38px;background:#dfe4ee"></div>
<div class="a" style="left:598px;top:376px;width:230px;height:38px;background:#dfe4ee"></div>
<div class="a" style="left:830px;top:376px;width:284px;height:38px;background:#dfe4ee"></div>
<div class="a" style="left:68px;top:414px;width:1000px;height:2px;background:#efefef"></div>
<div class="a" style="left:244px;top:376px;width:2px;height:38px;background:#efefef"></div>
<div class="a" style="left:596px;top:376px;width:2px;height:38px;background:#efefef"></div>
<div class="a" style="left:828px;top:376px;width:2px;height:38px;background:#efefef"></div>
<div class="t" style="left:9.5px;top:384.48px;font-size:26.5px;color:#000;">223</div>
<div class="a" style="left:80px;top:376px;width:164px;height:38px;overflow:hidden">
<div class="t" style="left:0;top:6.48px;font-size:26.5px">URY</div></div>
<div class="a" style="left:259px;top:376px;width:337px;height:38px;overflow:hidden">
<div class="t" style="left:0;top:6.48px;font-size:26.5px">Uruguay</div></div>
<div class="a" style="left:611px;top:376px;width:217px;height:38px;overflow:hidden">
<div class="t" style="left:0;top:6.48px;font-size:26.5px;letter-spacing:0.25px">South America</div></div>
<div class="t" style="left:842px;top:382.48px;font-size:26.5px;color:#000;letter-spacing:0.3px">South America</div>
<div class="a" style="left:0px;top:416px;width:66px;height:38px;background:#dae8fb"></div>
<div class="a" style="left:66px;top:416px;width:2px;height:40px;background:#000"></div>
<div class="a" style="left:0px;top:454px;width:66px;height:2px;background:#000"></div>
<div class="a" style="left:68px;top:416px;width:176px;height:38px;background:#b9d6f9"></div>
<div class="a" style="left:246px;top:416px;width:350px;height:38px;background:#b9d6f9"></div>
<div class="a" style="left:598px;top:416px;width:230px;height:38px;background:#b9d6f9"></div>
<div class="a" style="left:830px;top:416px;width:284px;height:38px;background:#b9d6f9"></div>
<div class="a" style="left:68px;top:454px;width:1000px;height:2px;background:#5c5c5c"></div>
<div class="a" style="left:244px;top:416px;width:2px;height:38px;background:#5c5c5c"></div>
<div class="a" style="left:596px;top:416px;width:2px;height:38px;background:#5c5c5c"></div>
<div class="a" style="left:828px;top:416px;width:2px;height:38px;background:#5c5c5c"></div>
<div class="t" style="left:9.5px;top:424.48px;font-size:26.5px;color:#000;">224</div>
<div class="a" style="left:67px;top:416px;width:179px;height:40px;border:4px solid #000"></div>
<div class="a" style="left:80px;top:416px;width:164px;height:38px;overflow:hidden">
<div class="t" style="left:0;top:6.48px;font-size:26.5px">USA</div></div>
<div class="a" style="left:259px;top:416px;width:337px;height:38px;overflow:hidden">
<div class="t" style="left:0;top:6.48px;font-size:26.5px">United States</div></div>
<div class="a" style="left:611px;top:416px;width:217px;height:38px;overflow:hidden">
<div class="t" style="left:0;top:6.48px;font-size:26.5px;letter-spacing:0.25px">North America</div></div>
<div class="t" style="left:842px;top:422.48px;font-size:26.5px;color:#000;letter-spacing:0.3px">North America</div>
<div class="a" style="left:0px;top:456px;width:66px;height:38px;background:#fff"></div>
<div class="a" style="left:66px;top:456px;width:2px;height:40px;background:#000"></div>
<div class="a" style="left:0px;top:494px;width:66px;height:2px;background:#000"></div>
<div class="a" style="left:68px;top:456px;width:176px;height:38px;background:#dfe4ee"></div>
<div class="a" style="left:246px;top:456px;width:350px;height:38px;background:#dfe4ee"></div>
<div class="a" style="left:598px;top:456px;width:230px;height:38px;background:#dfe4ee"></div>
<div class="a" style="left:830px;top:456px;width:284px;height:38px;background:#dfe4ee"></div>
<div class="a" style="left:68px;top:494px;width:1000px;height:2px;background:#efefef"></div>
<div class="a" style="left:244px;top:456px;width:2px;height:38px;background:#efefef"></div>
<div class="a" style="left:596px;top:456px;width:2px;height:38px;background:#efefef"></div>
<div class="a" style="left:828px;top:456px;width:2px;height:38px;background:#efefef"></div>
<div class="t" style="left:9.5px;top:464.48px;font-size:26.5px;color:#000;">225</div>
<div class="a" style="left:80px;top:456px;width:164px;height:38px;overflow:hidden">
<div class="t" style="left:0;top:6.48px;font-size:26.5px">UZB</div></div>
<div class="a" style="left:259px;top:456px;width:337px;height:38px;overflow:hidden">
<div class="t" style="left:0;top:6.48px;font-size:26.5px">Uzbekistan</div></div>
<div class="a" style="left:611px;top:456px;width:217px;height:38px;overflow:hidden">
<div class="t" style="left:0;top:6.48px;font-size:26.5px;letter-spacing:0.25px">Asia</div></div>
<div class="t" style="left:842px;top:462.48px;font-size:26.5px;color:#000;letter-spacing:0.3px">Southern and Central Asia</div>
<div class="a" style="left:0px;top:496px;width:66px;height:38px;background:#fff"></div>
<div class="a" style="left:66px;top:496px;width:2px;height:40px;background:#000"></div>
<div class="a" style="left:0px;top:534px;width:66px;height:2px;background:#000"></div>
<div class="a" style="left:68px;top:496px;width:176px;height:38px;background:#ffffff"></div>
<div class="a" style="left:246px;top:496px;width:350px;height:38px;background:#ffffff"></div>
<div class="a" style="left:598px;top:496px;width:230px;height:38px;background:#ffffff"></div>
<div class="a" style="left:830px;top:496px;width:284px;height:38px;background:#ffffff"></div>
<div class="a" style="left:68px;top:534px;width:1000px;height:2px;background:#efefef"></div>
<div class="a" style="left:244px;top:496px;width:2px;height:38px;background:#efefef"></div>
<div class="a" style="left:596px;top:496px;width:2px;height:38px;background:#efefef"></div>
<div class="a" style="left:828px;top:496px;width:2px;height:38px;background:#efefef"></div>
<div class="t" style="left:9.5px;top:504.48px;font-size:26.5px;color:#000;">226</div>
<div class="a" style="left:80px;top:496px;width:164px;height:38px;overflow:hidden">
<div class="t" style="left:0;top:6.48px;font-size:26.5px">VAT</div></div>
<div class="a" style="left:259px;top:496px;width:337px;height:38px;overflow:hidden">
<div class="t" style="left:0;top:6.48px;font-size:26.5px">Holy See (Vatican City State)</div></div>
<div class="a" style="left:611px;top:496px;width:217px;height:38px;overflow:hidden">
<div class="t" style="left:0;top:6.48px;font-size:26.5px;letter-spacing:0.25px">Europe</div></div>
<div class="t" style="left:842px;top:502.48px;font-size:26.5px;color:#000;letter-spacing:0.3px">Southern Europe</div>
<div class="a" style="left:0px;top:536px;width:66px;height:38px;background:#fff"></div>
<div class="a" style="left:66px;top:536px;width:2px;height:40px;background:#000"></div>
<div class="a" style="left:0px;top:574px;width:66px;height:2px;background:#000"></div>
<div class="a" style="left:68px;top:536px;width:176px;height:38px;background:#dfe4ee"></div>
<div class="a" style="left:246px;top:536px;width:350px;height:38px;background:#dfe4ee"></div>
<div class="a" style="left:598px;top:536px;width:230px;height:38px;background:#dfe4ee"></div>
<div class="a" style="left:830px;top:536px;width:284px;height:38px;background:#dfe4ee"></div>
<div class="a" style="left:68px;top:574px;width:1000px;height:2px;background:#efefef"></div>
<div class="a" style="left:244px;top:536px;width:2px;height:38px;background:#efefef"></div>
<div class="a" style="left:596px;top:536px;width:2px;height:38px;background:#efefef"></div>
<div class="a" style="left:828px;top:536px;width:2px;height:38px;background:#efefef"></div>
<div class="t" style="left:9.5px;top:544.48px;font-size:26.5px;color:#000;">227</div>
<div class="a" style="left:80px;top:536px;width:164px;height:38px;overflow:hidden">
<div class="t" style="left:0;top:6.48px;font-size:26.5px">VCT</div></div>
<div class="a" style="left:259px;top:536px;width:337px;height:38px;overflow:hidden">
<div class="t" style="left:0;top:6.48px;font-size:26.5px">Saint Vincent and the Grenadines</div></div>
<div class="a" style="left:611px;top:536px;width:217px;height:38px;overflow:hidden">
<div class="t" style="left:0;top:6.48px;font-size:26.5px;letter-spacing:0.25px">North America</div></div>
<div class="t" style="left:842px;top:542.48px;font-size:26.5px;color:#000;letter-spacing:0.3px">Caribbean</div>
<div class="a" style="left:0px;top:576px;width:66px;height:38px;background:#fff"></div>
<div class="a" style="left:66px;top:576px;width:2px;height:40px;background:#000"></div>
<div class="a" style="left:0px;top:614px;width:66px;height:2px;background:#000"></div>
<div class="a" style="left:68px;top:576px;width:176px;height:38px;background:#ffffff"></div>
<div class="a" style="left:246px;top:576px;width:350px;height:38px;background:#ffffff"></div>
<div class="a" style="left:598px;top:576px;width:230px;height:38px;background:#ffffff"></div>
<div class="a" style="left:830px;top:576px;width:284px;height:38px;background:#ffffff"></div>
<div class="a" style="left:68px;top:614px;width:1000px;height:2px;background:#efefef"></div>
<div class="a" style="left:244px;top:576px;width:2px;height:38px;background:#efefef"></div>
<div class="a" style="left:596px;top:576px;width:2px;height:38px;background:#efefef"></div>
<div class="a" style="left:828px;top:576px;width:2px;height:38px;background:#efefef"></div>
<div class="t" style="left:9.5px;top:584.48px;font-size:26.5px;color:#000;">228</div>
<div class="a" style="left:80px;top:576px;width:164px;height:38px;overflow:hidden">
<div class="t" style="left:0;top:6.48px;font-size:26.5px">VEN</div></div>
<div class="a" style="left:259px;top:576px;width:337px;height:38px;overflow:hidden">
<div class="t" style="left:0;top:6.48px;font-size:26.5px">Venezuela</div></div>
<div class="a" style="left:611px;top:576px;width:217px;height:38px;overflow:hidden">
<div class="t" style="left:0;top:6.48px;font-size:26.5px;letter-spacing:0.25px">South America</div></div>
<div class="t" style="left:842px;top:582.48px;font-size:26.5px;color:#000;letter-spacing:0.3px">South America</div>
<div class="a" style="left:0px;top:616px;width:66px;height:38px;background:#fff"></div>
<div class="a" style="left:66px;top:616px;width:2px;height:40px;background:#000"></div>
<div class="a" style="left:0px;top:654px;width:66px;height:2px;background:#000"></div>
<div class="a" style="left:68px;top:616px;width:176px;height:38px;background:#dfe4ee"></div>
<div class="a" style="left:246px;top:616px;width:350px;height:38px;background:#dfe4ee"></div>
<div class="a" style="left:598px;top:616px;width:230px;height:38px;background:#dfe4ee"></div>
<div class="a" style="left:830px;top:616px;width:284px;height:38px;background:#dfe4ee"></div>
<div class="a" style="left:68px;top:654px;width:1000px;height:2px;background:#efefef"></div>
<div class="a" style="left:244px;top:616px;width:2px;height:38px;background:#efefef"></div>
<div class="a" style="left:596px;top:616px;width:2px;height:38px;background:#efefef"></div>
<div class="a" style="left:828px;top:616px;width:2px;height:38px;background:#efefef"></div>
<div class="t" style="left:9.5px;top:624.48px;font-size:26.5px;color:#000;">229</div>
<div class="a" style="left:80px;top:616px;width:164px;height:38px;overflow:hidden">
<div class="t" style="left:0;top:6.48px;font-size:26.5px">VGB</div></div>
<div class="a" style="left:259px;top:616px;width:337px;height:38px;overflow:hidden">
<div class="t" style="left:0;top:6.48px;font-size:26.5px">Virgin Islands, British</div></div>
<div class="a" style="left:611px;top:616px;width:217px;height:38px;overflow:hidden">
<div class="t" style="left:0;top:6.48px;font-size:26.5px;letter-spacing:0.25px">North America</div></div>
<div class="t" style="left:842px;top:622.48px;font-size:26.5px;color:#000;letter-spacing:0.3px">Caribbean</div>
<div class="a" style="left:0px;top:656px;width:66px;height:38px;background:#fff"></div>
<div class="a" style="left:66px;top:656px;width:2px;height:40px;background:#000"></div>
<div class="a" style="left:0px;top:694px;width:66px;height:2px;background:#000"></div>
<div class="a" style="left:68px;top:656px;width:176px;height:38px;background:#ffffff"></div>
<div class="a" style="left:246px;top:656px;width:350px;height:38px;background:#ffffff"></div>
<div class="a" style="left:598px;top:656px;width:230px;height:38px;background:#ffffff"></div>
<div class="a" style="left:830px;top:656px;width:284px;height:38px;background:#ffffff"></div>
<div class="a" style="left:68px;top:694px;width:1000px;height:2px;background:#efefef"></div>
<div class="a" style="left:244px;top:656px;width:2px;height:38px;background:#efefef"></div>
<div class="a" style="left:596px;top:656px;width:2px;height:38px;background:#efefef"></div>
<div class="a" style="left:828px;top:656px;width:2px;height:38px;background:#efefef"></div>
<div class="t" style="left:9.5px;top:664.48px;font-size:26.5px;color:#000;">230</div>
<div class="a" style="left:80px;top:656px;width:164px;height:38px;overflow:hidden">
<div class="t" style="left:0;top:6.48px;font-size:26.5px">VIR</div></div>
<div class="a" style="left:259px;top:656px;width:337px;height:38px;overflow:hidden">
<div class="t" style="left:0;top:6.48px;font-size:26.5px">Virgin Islands, U.S.</div></div>
<div class="a" style="left:611px;top:656px;width:217px;height:38px;overflow:hidden">
<div class="t" style="left:0;top:6.48px;font-size:26.5px;letter-spacing:0.25px">North America</div></div>
<div class="t" style="left:842px;top:662.48px;font-size:26.5px;color:#000;letter-spacing:0.3px">Caribbean</div>
<div class="a" style="left:0px;top:696px;width:66px;height:38px;background:#fff"></div>
<div class="a" style="left:66px;top:696px;width:2px;height:40px;background:#000"></div>
<div class="a" style="left:0px;top:734px;width:66px;height:2px;background:#000"></div>
<div class="a" style="left:68px;top:696px;width:176px;height:38px;background:#dfe4ee"></div>
<div class="a" style="left:246px;top:696px;width:350px;height:38px;background:#dfe4ee"></div>
<div class="a" style="left:598px;top:696px;width:230px;height:38px;background:#dfe4ee"></div>
<div class="a" style="left:830px;top:696px;width:284px;height:38px;background:#dfe4ee"></div>
<div class="a" style="left:68px;top:734px;width:1000px;height:2px;background:#efefef"></div>
<div class="a" style="left:244px;top:696px;width:2px;height:38px;background:#efefef"></div>
<div class="a" style="left:596px;top:696px;width:2px;height:38px;background:#efefef"></div>
<div class="a" style="left:828px;top:696px;width:2px;height:38px;background:#efefef"></div>
<div class="t" style="left:9.5px;top:704.48px;font-size:26.5px;color:#000;">231</div>
<div class="a" style="left:80px;top:696px;width:164px;height:38px;overflow:hidden">
<div class="t" style="left:0;top:6.48px;font-size:26.5px">VNM</div></div>
<div class="a" style="left:259px;top:696px;width:337px;height:38px;overflow:hidden">
<div class="t" style="left:0;top:6.48px;font-size:26.5px">Vietnam</div></div>
<div class="a" style="left:611px;top:696px;width:217px;height:38px;overflow:hidden">
<div class="t" style="left:0;top:6.48px;font-size:26.5px;letter-spacing:0.25px">Asia</div></div>
<div class="t" style="left:842px;top:702.48px;font-size:26.5px;color:#000;letter-spacing:0.3px">Southeast Asia</div>
<div class="a" style="left:0px;top:736px;width:66px;height:38px;background:#fff"></div>
<div class="a" style="left:66px;top:736px;width:2px;height:40px;background:#000"></div>
<div class="a" style="left:0px;top:774px;width:66px;height:2px;background:#000"></div>
<div class="a" style="left:68px;top:736px;width:176px;height:38px;background:#ffffff"></div>
<div class="a" style="left:246px;top:736px;width:350px;height:38px;background:#ffffff"></div>
<div class="a" style="left:598px;top:736px;width:230px;height:38px;background:#ffffff"></div>
<div class="a" style="left:830px;top:736px;width:284px;height:38px;background:#ffffff"></div>
<div class="a" style="left:68px;top:774px;width:1000px;height:2px;background:#efefef"></div>
<div class="a" style="left:244px;top:736px;width:2px;height:38px;background:#efefef"></div>
<div class="a" style="left:596px;top:736px;width:2px;height:38px;background:#efefef"></div>
<div class="a" style="left:828px;top:736px;width:2px;height:38px;background:#efefef"></div>
<div class="t" style="left:9.5px;top:744.48px;font-size:26.5px;color:#000;">232</div>
<div class="a" style="left:80px;top:736px;width:164px;height:38px;overflow:hidden">
<div class="t" style="left:0;top:6.48px;font-size:26.5px">VUT</div></div>
<div class="a" style="left:259px;top:736px;width:337px;height:38px;overflow:hidden">
<div class="t" style="left:0;top:6.48px;font-size:26.5px">Vanuatu</div></div>
<div class="a" style="left:611px;top:736px;width:217px;height:38px;overflow:hidden">
<div class="t" style="left:0;top:6.48px;font-size:26.5px;letter-spacing:0.25px">Oceania</div></div>
<div class="t" style="left:842px;top:742.48px;font-size:26.5px;color:#000;letter-spacing:0.3px">Melanesia</div>
<div class="a" style="left:0px;top:776px;width:66px;height:38px;background:#fff"></div>
<div class="a" style="left:66px;top:776px;width:2px;height:40px;background:#000"></div>
<div class="a" style="left:0px;top:814px;width:66px;height:2px;background:#000"></div>
<div class="a" style="left:68px;top:776px;width:176px;height:38px;background:#dfe4ee"></div>
<div class="a" style="left:246px;top:776px;width:350px;height:38px;background:#dfe4ee"></div>
<div class="a" style="left:598px;top:776px;width:230px;height:38px;background:#dfe4ee"></div>
<div class="a" style="left:830px;top:776px;width:284px;height:38px;background:#dfe4ee"></div>
<div class="a" style="left:68px;top:814px;width:1000px;height:2px;background:#efefef"></div>
<div class="a" style="left:244px;top:776px;width:2px;height:38px;background:#efefef"></div>
<div class="a" style="left:596px;top:776px;width:2px;height:38px;background:#efefef"></div>
<div class="a" style="left:828px;top:776px;width:2px;height:38px;background:#efefef"></div>
<div class="t" style="left:9.5px;top:784.48px;font-size:26.5px;color:#000;">233</div>
<div class="a" style="left:80px;top:776px;width:164px;height:38px;overflow:hidden">
<div class="t" style="left:0;top:6.48px;font-size:26.5px">WLF</div></div>
<div class="a" style="left:259px;top:776px;width:337px;height:38px;overflow:hidden">
<div class="t" style="left:0;top:6.48px;font-size:26.5px">Wallis and Futuna</div></div>
<div class="a" style="left:611px;top:776px;width:217px;height:38px;overflow:hidden">
<div class="t" style="left:0;top:6.48px;font-size:26.5px;letter-spacing:0.25px">Oceania</div></div>
<div class="t" style="left:842px;top:782.48px;font-size:26.5px;color:#000;letter-spacing:0.3px">Polynesia</div>
<div class="a" style="left:0px;top:816px;width:66px;height:38px;background:#fff"></div>
<div class="a" style="left:66px;top:816px;width:2px;height:40px;background:#000"></div>
<div class="a" style="left:0px;top:854px;width:66px;height:2px;background:#000"></div>
<div class="a" style="left:68px;top:816px;width:176px;height:38px;background:#ffffff"></div>
<div class="a" style="left:246px;top:816px;width:350px;height:38px;background:#ffffff"></div>
<div class="a" style="left:598px;top:816px;width:230px;height:38px;background:#ffffff"></div>
<div class="a" style="left:830px;top:816px;width:284px;height:38px;background:#ffffff"></div>
<div class="a" style="left:68px;top:854px;width:1000px;height:2px;background:#efefef"></div>
<div class="a" style="left:244px;top:816px;width:2px;height:38px;background:#efefef"></div>
<div class="a" style="left:596px;top:816px;width:2px;height:38px;background:#efefef"></div>
<div class="a" style="left:828px;top:816px;width:2px;height:38px;background:#efefef"></div>
<div class="t" style="left:9.5px;top:824.48px;font-size:26.5px;color:#000;">234</div>
<div class="a" style="left:80px;top:816px;width:164px;height:38px;overflow:hidden">
<div class="t" style="left:0;top:6.48px;font-size:26.5px">WSM</div></div>
<div class="a" style="left:259px;top:816px;width:337px;height:38px;overflow:hidden">
<div class="t" style="left:0;top:6.48px;font-size:26.5px">Samoa</div></div>
<div class="a" style="left:611px;top:816px;width:217px;height:38px;overflow:hidden">
<div class="t" style="left:0;top:6.48px;font-size:26.5px;letter-spacing:0.25px">Oceania</div></div>
<div class="t" style="left:842px;top:822.48px;font-size:26.5px;color:#000;letter-spacing:0.3px">Polynesia</div>
</div>
<div class="a" style="left:1700px;top:388px;width:1px;height:882px;background:#ebebeb"></div>
<div class="a" style="left:1729px;top:388px;width:1px;height:882px;background:#e6e6e6"></div>
<div class="a" style="left:786px;top:1240px;width:914px;height:1px;background:#ebebeb"></div>
<div class="a" style="left:1708px;top:1149px;width:16px;height:63px;background:#c2c2c2;border-radius:8px"></div>
<div class="a" style="left:792px;top:1248px;width:65px;height:16px;background:#c2c2c2;border-radius:8px"></div>
<div class="a" style="left:1746px;top:388px;width:168px;height:47px;background:linear-gradient(#cfe1f8,#5f9def);border-top:2px solid #000;border-right:2px solid #000;border-radius:0 8px 0 0"></div>
<div class="a" style="left:1913px;top:433px;width:239px;height:2px;background:#000"></div>
<svg class="a" style="left:1755px;top:397px" width="31" height="30" viewBox="0 0 31 30"><rect x="1.5" y="1.5" width="28" height="25" rx="2" fill="#fff" stroke="#4a8cca" stroke-width="3"/><rect x="1.5" y="1.5" width="28" height="5" fill="#4a8cca"/><rect x="3" y="7" width="13" height="8" fill="#a9d0ee"/><path d="M16 6V27M3 15H29" stroke="#4a8cca" stroke-width="2"/><circle cx="24" cy="24" r="7" fill="#8fbcf0"/><path d="M19 24H29M19 21V27M29 21V27" stroke="#4a7fc1" stroke-width="1.3"/></svg>
<div class="t " style="left:1795.5px;top:399.28px;font-size:26.5px;color:#000;">Value</div>
<svg class="a" style="left:1878px;top:401px" width="22" height="22" viewBox="0 0 22 22"><path d="M1.00 1.00 L6.42 1.00 L10.50 5.28 L14.58 1.00 L20.00 1.00 L20.00 6.42 L15.72 10.50 L20.00 14.58 L20.00 20.00 L14.58 20.00 L10.50 15.72 L6.42 20.00 L1.00 20.00 L1.00 14.58 L5.28 10.50 L1.00 6.42Z" fill="#fff" stroke="#000" stroke-width="1.7" stroke-linejoin="miter"/></svg>
<svg class="a" style="left:1977px;top:397px" width="31" height="30" viewBox="0 0 31 30"><path d="M1.5 3Q1.5 1.5 3 1.5H23L29.5 8V27Q29.5 28.5 28 28.5H3Q1.5 28.5 1.5 27Z" fill="#a9dc98" stroke="#52a844" stroke-width="3"/><rect x="7" y="2" width="15" height="9" fill="#fff" stroke="#52a844" stroke-width="1.5"/><rect x="17" y="4" width="2.5" height="5" fill="#52a844"/></svg>
<div class="a" style="left:2014px;top:390px;width:44px;height:44px;background:#c8c8c8;border:2px solid #b4b4b4"></div>
<svg class="a" style="left:2020px;top:401px" width="32" height="22" viewBox="0 0 32 22"><path d="M12 6H25" stroke="#4a8cca" stroke-width="3.5"/><path d="M22 0L31 6L22 12Z" fill="#4a8cca"/><path d="M7 16H20" stroke="#4ea53c" stroke-width="3.5"/><path d="M10 10L1 16L10 22Z" fill="#4ea53c"/></svg>
<svg class="a" style="left:2075px;top:401px" width="22" height="12" viewBox="0 0 22 12"><path d="M2 2H20L11 10Z" fill="none" stroke="#000" stroke-width="2.5" stroke-linejoin="round"/></svg>
<svg class="a" style="left:2114px;top:399px" width="21" height="8" viewBox="0 0 21 8"><rect x="1.2" y="1.2" width="18.6" height="5.6" fill="#fff" stroke="#000" stroke-width="2.4"/></svg>
<svg class="a" style="left:1733px;top:806px" width="10" height="16" viewBox="0 0 10 16"><path d="M9 0V16L0 8Z" fill="#5e6aa8"/><path d="M7 4V12L3 8Z" fill="#9aa2cc"/></svg>
<svg class="a" style="left:1733px;top:834px" width="10" height="16" viewBox="0 0 10 16"><path d="M1 0V16L10 8Z" fill="#5e6aa8"/></svg>
<div class="t " style="left:1767px;top:855.25px;font-size:27px;color:#000;">Select a cell to view/edit value</div>
<div class="t " style="left:1789px;top:895.35px;font-size:27px;color:#000;">Press F7 to hide this panel</div>
<svg class="a" style="left:799px;top:1277px" width="30" height="30" viewBox="0 0 30 30"><circle cx="15" cy="15" r="13" fill="#e6e6e6" stroke="#a5d09a" stroke-width="3"/><path d="M8 15L13 20L22 10" stroke="#a5d09a" stroke-width="3" fill="none"/></svg>
<div class="t " style="left:835.5px;top:1281.67px;font-size:22.5px;color:#9d9d9d;">Save</div>
<svg class="a" style="left:905px;top:1278px" width="26" height="27" viewBox="0 0 26 27"><rect x="1.5" y="1.5" width="23" height="24" fill="#f0e4e2" stroke="#e5a39a" stroke-width="3"/><path d="M7 7L19 20M19 7L7 20" stroke="#e5a39a" stroke-width="2.5"/></svg>
<div class="t " style="left:938.5px;top:1281.67px;font-size:22.5px;color:#9d9d9d;">Cancel</div>
<svg class="a" style="left:1027px;top:1277px" width="31" height="30" viewBox="0 0 31 30"><path d="M6 2H28V6H24V24Q24 29 19 29H2Q6 27 6 22Z" fill="#a6c2dc"/><circle cx="15" cy="20" r="5" fill="none" stroke="#fff" stroke-width="2"/><path d="M18 23L22 27" stroke="#fff" stroke-width="2"/></svg>
<div class="t " style="left:1063px;top:1281.25px;font-size:23px;color:#9d9d9d;">Script</div>
<div class="a" style="left:1142px;top:1270px;width:2px;height:43px;background:#c4c4c4"></div>
<svg class="a" style="left:1155px;top:1279px" width="32" height="30" viewBox="0 0 32 30"><rect x="1" y="1" width="28" height="5" fill="#9ec0de"/><rect x="1" y="12" width="12" height="5" fill="#9ec0de"/><rect x="1" y="23" width="12" height="5" fill="#9ec0de"/><rect x="1" y="12" width="18" height="5" fill="#9ec0de"/><path d="M15 28L26 17" stroke="#9ec0de" stroke-width="5"/></svg>
<svg class="a" style="left:1199px;top:1279px" width="32" height="30" viewBox="0 0 32 30"><rect x="1" y="1" width="28" height="5" fill="#4a8cca"/><rect x="1" y="12" width="12" height="5" fill="#4a8cca"/><rect x="1" y="23" width="12" height="5" fill="#4a8cca"/><rect x="1" y="1" width="28" height="5" fill="#4a8cca"/><rect x="20" y="12" width="5" height="18" fill="#4ea53c"/><rect x="14" y="18" width="17" height="5" fill="#4ea53c"/></svg>
<svg class="a" style="left:1243px;top:1279px" width="32" height="30" viewBox="0 0 32 30"><rect x="1" y="1" width="28" height="5" fill="#4a8cca"/><rect x="1" y="12" width="12" height="5" fill="#4a8cca"/><rect x="1" y="23" width="12" height="5" fill="#4a8cca"/><path d="M16 13Q13 20 16 28M28 13Q31 20 28 28" stroke="#4a8cca" stroke-width="1.5" fill="none"/><rect x="20.5" y="15" width="3.5" height="11" fill="#4ea53c"/><rect x="16.5" y="19" width="11.5" height="3.5" fill="#4ea53c"/></svg>
<svg class="a" style="left:1287px;top:1279px" width="32" height="30" viewBox="0 0 32 30"><rect x="1" y="1" width="28" height="5" fill="#4a8cca"/><rect x="1" y="12" width="12" height="5" fill="#4a8cca"/><rect x="1" y="23" width="12" height="5" fill="#4a8cca"/><rect x="14" y="18" width="17" height="4.5" fill="#d2432f"/></svg>
<svg class="a" style="left:1333px;top:1279px" width="3" height="30" viewBox="0 0 3 30"><rect x="0" y="0" width="2.2" height="2.2" fill="#b5ae9c"/><rect x="0" y="9" width="2.2" height="2.2" fill="#b5ae9c"/><rect x="0" y="18" width="2.2" height="2.2" fill="#b5ae9c"/><rect x="0" y="27" width="2.2" height="2.2" fill="#b5ae9c"/></svg>
<svg class="a" style="left:1351px;top:1279px" width="22" height="28" viewBox="0 0 22 28"><rect x="1" y="1" width="4" height="25" fill="#4a8cca"/><path d="M20 1L8 13.5L20 26" stroke="#4a8cca" stroke-width="4" fill="none"/></svg>
<svg class="a" style="left:1397px;top:1279px" width="15" height="28" viewBox="0 0 15 28"><path d="M13 1L3 13.5L13 26" stroke="#4a8cca" stroke-width="4" fill="none"/></svg>
<svg class="a" style="left:1443px;top:1279px" width="15" height="28" viewBox="0 0 15 28"><path d="M2 1L12 13.5L2 26" stroke="#4a8cca" stroke-width="4" fill="none"/></svg>
<svg class="a" style="left:1483px;top:1279px" width="22" height="28" viewBox="0 0 22 28"><rect x="17" y="1" width="4" height="25" fill="#4a8cca"/><path d="M2 1L14 13.5L2 26" stroke="#4a8cca" stroke-width="4" fill="none"/></svg>
<div class="a" style="left:1523px;top:1270px;width:2px;height:43px;background:#c4c4c4"></div>
<svg class="a" style="left:1535px;top:1277px" width="30" height="30" viewBox="0 0 30 30"><path d="M3 10V24H14M10 20L14 24L10 28" stroke="#a9c6e2" stroke-width="2.5" fill="none"/><rect x="14" y="2" width="13" height="15" rx="1" fill="#a9c6e2"/></svg>
<svg class="a" style="left:1579px;top:1277px" width="31" height="30" viewBox="0 0 31 30"><path d="M2 8V2H8M23 2H29V8M29 22V28H23M8 28H2V22" stroke="#a9c6e2" stroke-width="3" fill="none"/><rect x="10" y="9" width="11" height="12" fill="none" stroke="#a9c6e2" stroke-width="2.5"/></svg>
<svg class="a" style="left:1625px;top:1279px" width="3" height="30" viewBox="0 0 3 30"><rect x="0" y="0" width="2.2" height="2.2" fill="#b5ae9c"/><rect x="0" y="9" width="2.2" height="2.2" fill="#b5ae9c"/><rect x="0" y="18" width="2.2" height="2.2" fill="#b5ae9c"/><rect x="0" y="27" width="2.2" height="2.2" fill="#b5ae9c"/></svg>
<svg class="a" style="left:1639px;top:1277px" width="31" height="31" viewBox="0 0 31 31"><rect x="1.5" y="1.5" width="27" height="26" rx="2" fill="#fff" stroke="#4a8cca" stroke-width="3"/><rect x="1.5" y="1.5" width="27" height="5" fill="#4a8cca"/><rect x="3" y="7" width="13" height="10" fill="#a9d0ee"/><path d="M16 6V28M3 17H28" stroke="#4a8cca" stroke-width="2"/><circle cx="24" cy="24" r="6" fill="#4a8cca" stroke="#d6d6d6" stroke-width="1.5"/><circle cx="24" cy="24" r="2" fill="#d6d6d6"/></svg>
<div class="t " style="left:1676px;top:1281.38px;font-size:22.5px;color:#7a7a7a;">Panels</div>
<svg class="a" style="left:1753px;top:1287px" width="11" height="9" viewBox="0 0 11 9"><path d="M0 0H11L5.5 9Z" fill="#000"/></svg>
<svg class="a" style="left:1773px;top:1279px" width="3" height="30" viewBox="0 0 3 30"><rect x="0" y="0" width="2.2" height="2.2" fill="#b5ae9c"/><rect x="0" y="9" width="2.2" height="2.2" fill="#b5ae9c"/><rect x="0" y="18" width="2.2" height="2.2" fill="#b5ae9c"/><rect x="0" y="27" width="2.2" height="2.2" fill="#b5ae9c"/></svg>
<svg class="a" style="left:1793px;top:1279px" width="29" height="27" viewBox="0 0 29 27"><rect x="0" y="0" width="29" height="27" rx="3" fill="#2a8ad6"/><rect x="3" y="5" width="6" height="7" fill="#fff"/><rect x="3" y="15" width="6" height="8" fill="#fff"/><rect x="12" y="5" width="14" height="18" fill="#fff"/><path d="M14 9H24M14 13H24M14 17H24M14 20H24" stroke="#2a8ad6" stroke-width="1" stroke-dasharray="2 1"/></svg>
<svg class="a" style="left:1839px;top:1279px" width="3" height="30" viewBox="0 0 3 30"><rect x="0" y="0" width="2.2" height="2.2" fill="#b5ae9c"/><rect x="0" y="9" width="2.2" height="2.2" fill="#b5ae9c"/><rect x="0" y="18" width="2.2" height="2.2" fill="#b5ae9c"/><rect x="0" y="27" width="2.2" height="2.2" fill="#b5ae9c"/></svg>
<svg class="a" style="left:1852px;top:1277px" width="31" height="31" viewBox="0 0 31 31"><circle cx="15.5" cy="15.5" r="11" fill="#4a8cca"/><circle cx="15.5" cy="15.5" r="5" fill="#a9d0ee"/><rect x="12.5" y="0" width="6" height="7" fill="#4a8cca" transform="rotate(0 15.5 15.5)"/><rect x="12.5" y="0" width="6" height="7" fill="#4a8cca" transform="rotate(45 15.5 15.5)"/><rect x="12.5" y="0" width="6" height="7" fill="#4a8cca" transform="rotate(90 15.5 15.5)"/><rect x="12.5" y="0" width="6" height="7" fill="#4a8cca" transform="rotate(135 15.5 15.5)"/><rect x="12.5" y="0" width="6" height="7" fill="#4a8cca" transform="rotate(180 15.5 15.5)"/><rect x="12.5" y="0" width="6" height="7" fill="#4a8cca" transform="rotate(225 15.5 15.5)"/><rect x="12.5" y="0" width="6" height="7" fill="#4a8cca" transform="rotate(270 15.5 15.5)"/><rect x="12.5" y="0" width="6" height="7" fill="#4a8cca" transform="rotate(315 15.5 15.5)"/></svg>
<svg class="a" style="left:1889px;top:1288px" width="10" height="9" viewBox="0 0 10 9"><path d="M0 0H10L5.0 9Z" fill="#000"/></svg>
<div class="a" style="left:792px;top:1320px;width:1043px;height:48px;background:#d6d6d6;border:2px solid #c8c8c8"></div>
<svg class="a" style="left:800px;top:1330px" width="28" height="28" viewBox="0 0 28 28"><circle cx="14" cy="14" r="12.5" fill="#f5faff" stroke="#1f4f93" stroke-width="3"/><circle cx="14" cy="8" r="2" fill="#1f4f93"/><path d="M11 12H15V20H17M11 20H17" stroke="#1f4f93" stroke-width="3" fill="none"/></svg>
<div class="t " style="left:842px;top:1331.30px;font-size:26px;color:#1a1a1a;">239 row(s) fetched - 3ms (+4ms)</div>
<svg class="a" style="left:1793px;top:1328px" width="31" height="32" viewBox="0 0 31 32"><rect x="6" y="8" width="22" height="16" fill="#a9d0ee" stroke="#4a8cca" stroke-width="2.5"/><path d="M3 2H11M7 2V30M3 30H11" stroke="#4a8cca" stroke-width="2.5" fill="none"/></svg>
<div class="a" style="left:1842px;top:1320px;width:264px;height:48px;background:#d6d6d6;border:2px solid #c8c8c8"></div>
<svg class="a" style="left:1850px;top:1328px" width="33" height="31" viewBox="0 0 33 31"><path d="M3 15V12Q3 6 9 6H24" stroke="#4ea53c" stroke-width="4" fill="none"/><path d="M21 0L30 6L21 12Z" fill="#4ea53c"/><path d="M30 14V18Q30 24 24 24H9" stroke="#4ea53c" stroke-width="4" fill="none"/><path d="M12 18L3 24L12 30Z" fill="#4ea53c"/></svg>
<div class="t " style="left:1895px;top:1331.05px;font-size:27px;color:#1a1a1a;">239</div>
</body></html>
